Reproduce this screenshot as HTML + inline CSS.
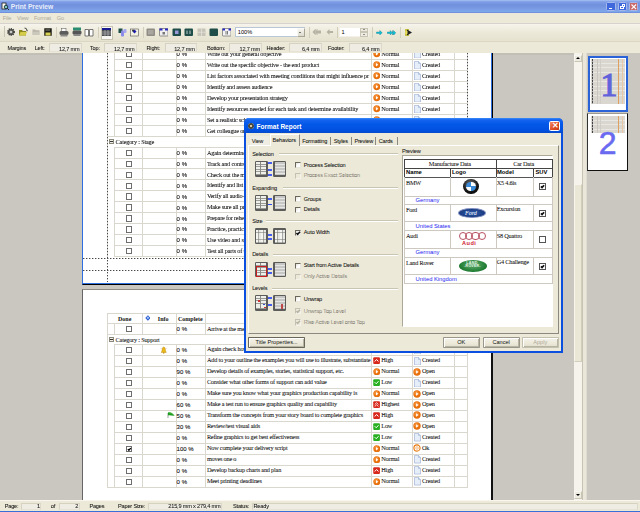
<!DOCTYPE html>
<html><head><meta charset="utf-8"><style>
*{margin:0;padding:0;box-sizing:border-box}
html,body{width:640px;height:512px;overflow:hidden;background:#ECE9D8;position:relative;font-family:"Liberation Sans",sans-serif}
.t{position:absolute;white-space:nowrap;line-height:1}
.ui{font-size:5.6px;letter-spacing:-0.18px;color:#111;-webkit-text-stroke:0.05px #111}
.sr{font-family:"Liberation Serif",serif;font-size:6.3px;letter-spacing:-0.22px;color:#111;-webkit-text-stroke:0.05px #111}
.ck{position:absolute;overflow:visible}
.pc{font-size:6px;color:#111;word-spacing:0.1px;-webkit-text-stroke:0.1px #111}
</style></head>
<body>
<div id="root" style="position:absolute;left:0;top:0;width:640px;height:512px;overflow:hidden;filter:blur(0.3px)">
<div style="position:absolute;left:0px;top:0px;width:640px;height:12.5px;background:linear-gradient(#A6C2F2 0,#7E9CE6 14%,#7090DE 40%,#7A9AE4 65%,#7CA8EA 88%,#6C86DA 100%)"></div>
<svg style="position:absolute;left:1px;top:1.5px" width="9" height="9" viewBox="0 0 18 18"><rect x="2" y="2" width="8" height="12" fill="#FFFFF4" stroke="#222" stroke-width="1.6"/><circle cx="10" cy="10" r="3.6" fill="#7ACAC0" stroke="#1A2A30" stroke-width="1.8"/><path d="M12.5 12.5 L16 16" stroke="#1A2A30" stroke-width="2"/></svg>
<div class="t " style="left:10.8px;top:4.2px;font-size:6.7px;font-weight:bold;color:#E8EEFA">Print Preview</div>
<div style="position:absolute;left:606px;top:1.8px;width:9.6px;height:9.6px;background:#3F68DC;border:0.7px solid #A4B8EC;border-radius:1.5px"></div>
<div style="position:absolute;left:617.7px;top:1.8px;width:9.6px;height:9.6px;background:#3F68DC;border:0.7px solid #A4B8EC;border-radius:1.5px"></div>
<div style="position:absolute;left:628.8px;top:1.8px;width:9.6px;height:9.6px;background:#C86868;border:0.7px solid #A4B8EC;border-radius:1.5px"></div>
<div style="position:absolute;left:608.6px;top:7.6px;width:3.6px;height:1.4px;background:#fff"></div>
<div style="position:absolute;left:621.6px;top:3.6px;width:3.8px;height:3.2px;border:1px solid #fff;border-top-width:1.4px"></div>
<div style="position:absolute;left:619.8px;top:5.6px;width:3.8px;height:3.4px;border:1px solid #fff;border-top-width:1.4px;background:#3F68DC"></div>
<svg style="position:absolute;left:629.8px;top:2.8px" width="7.6" height="7.6" viewBox="0 0 15.2 15.2"><path d="M3 3 L12.2 12.2 M12.2 3 L3 12.2" stroke="#fff" stroke-width="2.2"/></svg>
<div style="position:absolute;left:0px;top:12.5px;width:640px;height:11px;background:#ECE9D8;border-bottom:1px solid #D6D2CE"></div>
<div class="t " style="left:2.8px;top:15.6px;font-size:5.6px;letter-spacing:-0.12px;color:#ACA899">File</div>
<div class="t " style="left:17px;top:15.6px;font-size:5.6px;letter-spacing:-0.12px;color:#ACA899">View</div>
<div class="t " style="left:34px;top:15.6px;font-size:5.6px;letter-spacing:-0.12px;color:#ACA899">Format</div>
<div class="t " style="left:56.8px;top:15.6px;font-size:5.6px;letter-spacing:-0.12px;color:#ACA899">Go</div>
<div style="position:absolute;left:0px;top:23.5px;width:640px;height:18px;background:linear-gradient(#F6F4EC,#ECE9D8 50%,#E6E2D0);border-bottom:1px solid #DCD7C4"></div>
<div style="position:absolute;left:3.5px;top:26px;width:1px;height:11px;background:#C9C5B4"></div>
<div style="position:absolute;left:55.5px;top:26.5px;width:1px;height:11px;background:#D2CEBE"></div>
<div style="position:absolute;left:98.4px;top:26.5px;width:1px;height:11px;background:#D2CEBE"></div>
<div style="position:absolute;left:142.6px;top:26.5px;width:1px;height:11px;background:#D2CEBE"></div>
<div style="position:absolute;left:308.7px;top:26.5px;width:1px;height:11px;background:#D2CEBE"></div>
<div style="position:absolute;left:337px;top:26.5px;width:1px;height:11px;background:#D2CEBE"></div>
<div style="position:absolute;left:371.7px;top:26.5px;width:1px;height:11px;background:#D2CEBE"></div>
<div style="position:absolute;left:400px;top:26.5px;width:1px;height:11px;background:#D2CEBE"></div>
<svg style="position:absolute;left:5.5px;top:27px" width="10" height="10" viewBox="0 0 20 20"><circle cx="10" cy="10" r="6.2" fill="#5A5A58" stroke="#3A3A38" stroke-width="3.2" stroke-dasharray="2.2 1.8"/><circle cx="10" cy="10" r="2.6" fill="#C8C8C0"/></svg>
<svg style="position:absolute;left:17.5px;top:27px" width="10" height="10" viewBox="0 0 20 20"><path d="M2 6 h6 l2 2 h6 v9 h-14z" fill="#8C8620"/><path d="M2 17 l3 -7 h13 l-3 7z" fill="#D4CC48"/><path d="M13 2 q5 0 5 5" fill="none" stroke="#222" stroke-width="1.6"/><path d="M16 7 l2 2 l2 -2z" fill="#222"/></svg>
<svg style="position:absolute;left:31.5px;top:28px" width="8" height="8" viewBox="0 0 16 16"><path d="M1 3 h5 l1.5 1.5 h7.5 v9 h-14z" fill="#B9B6A9"/><path d="M1 13.5 l2 -6 h12 l-2 6z" fill="#CBC8BC"/></svg>
<svg style="position:absolute;left:43.5px;top:28px" width="8" height="8" viewBox="0 0 16 16"><rect x="0.5" y="0.5" width="15" height="15" fill="#1E1E18"/><rect x="3" y="1" width="9" height="5" fill="#505048"/><rect x="3" y="9" width="10" height="6" fill="#D8D050"/></svg>
<svg style="position:absolute;left:59px;top:27.5px" width="10" height="9" viewBox="0 0 20 18"><rect x="5" y="1" width="9" height="6" fill="#F8F8F8" stroke="#555" stroke-width="1"/><rect x="1" y="6" width="18" height="8" rx="3" fill="#5C5C5C"/><rect x="3" y="13" width="14" height="4" fill="#8A8A88"/></svg>
<svg style="position:absolute;left:71.5px;top:27px" width="10" height="10" viewBox="0 0 20 20"><rect x="2" y="1" width="16" height="6" fill="#2A8C70"/><rect x="1" y="7" width="18" height="8" rx="3" fill="#555"/><rect x="3" y="14" width="14" height="4" fill="#888"/></svg>
<svg style="position:absolute;left:84px;top:27.5px" width="10" height="9" viewBox="0 0 20 18"><path d="M2 3 h7 v13 h-7z" fill="#fff" stroke="#444" stroke-width="1.4"/><path d="M11 3 h7 v13 h-7z" fill="#fff" stroke="#444" stroke-width="1.4"/></svg>
<div style="position:absolute;left:100.5px;top:25.5px;width:12.5px;height:14px;background:#F8F7F2;border:1px solid #C8C4B2"></div>
<svg style="position:absolute;left:102px;top:27.8px" width="9" height="8" viewBox="0 0 18 16"><rect x="0" y="0" width="18" height="4" fill="#1A1A90"/><rect x="0" y="4" width="18" height="12" fill="#4A4E50"/><path d="M0 8 h18 M0 12 h18 M6 4 v12 M12 4 v12" stroke="#C8C8C8" stroke-width="1.2"/></svg>
<svg style="position:absolute;left:117.5px;top:27.5px" width="9.5" height="9" viewBox="0 0 19.0 18"><rect x="1" y="1" width="8" height="9" fill="#1E5048"/><rect x="6" y="5" width="6" height="12" rx="2" fill="#8A8AE8"/><rect x="11" y="2" width="6" height="8" rx="2" fill="#A8A8F0"/></svg>
<svg style="position:absolute;left:129.5px;top:27.5px" width="9.5" height="9" viewBox="0 0 19.0 18"><rect x="1" y="2" width="16" height="14" fill="#F4F2E0" stroke="#555" stroke-width="1.2"/><path d="M9 3 l4 4 l-4 4 l-4 -4z" fill="#2020B0"/><circle cx="6" cy="5" r="2" fill="#333"/></svg>
<svg style="position:absolute;left:146px;top:27.5px" width="9.5" height="9" viewBox="0 0 19.0 18"><rect x="1" y="1" width="17" height="15" rx="2" fill="#8F8D86"/><rect x="4" y="4" width="11" height="9" fill="#A8A69E"/></svg>
<svg style="position:absolute;left:158.5px;top:27.5px" width="9.5" height="9" viewBox="0 0 19.0 18"><rect x="1" y="1" width="17" height="15" rx="1" fill="#F0F0F0" stroke="#555" stroke-width="1.2"/><path d="M1 1 h6 v4 h-6z M12 1 h6 v4 h-6z" fill="#2A2AC0"/><rect x="7" y="8" width="5" height="5" fill="#777"/></svg>
<svg style="position:absolute;left:171.5px;top:27.5px" width="9.5" height="9" viewBox="0 0 19.0 18"><rect x="1" y="1" width="17" height="15" rx="2" fill="#1F4E4A"/><rect x="6" y="5" width="7" height="7" fill="#9A9AD8"/></svg>
<svg style="position:absolute;left:183.5px;top:27.5px" width="9.5" height="9" viewBox="0 0 19.0 18"><rect x="1" y="1" width="17" height="15" rx="2" fill="#1F4E4A"/><path d="M6 5 v7 M12 5 v7" stroke="#E8E8E8" stroke-width="1.6"/></svg>
<svg style="position:absolute;left:196.5px;top:27.5px" width="9" height="9" viewBox="0 0 18 18"><rect x="1" y="1" width="16" height="15" rx="1" fill="#C6C3B8"/><path d="M9 1 v15 M1 8.5 h16" stroke="#E8E6DE" stroke-width="1.4"/></svg>
<svg style="position:absolute;left:209px;top:27.5px" width="9.5" height="9" viewBox="0 0 19.0 18"><rect x="1" y="1" width="17" height="15" rx="2" fill="#1F4E4A"/></svg>
<svg style="position:absolute;left:221.5px;top:27.5px" width="9.5" height="9" viewBox="0 0 19.0 18"><rect x="1" y="1" width="17" height="15" rx="1" fill="#F4F4F4" stroke="#555" stroke-width="1.2"/><path d="M1 1 h5 v4 h-5z M13 1 h5 v4 h-5z" fill="#2A2AC0"/><path d="M8 6 v7 M11 6 v7" stroke="#444" stroke-width="1.4"/></svg>
<div style="position:absolute;left:235.3px;top:27px;width:69.7px;height:10.3px;background:#fff;border:1px solid #B8C6D8"></div>
<div class="t " style="left:237.8px;top:30.2px;font-size:5.6px;color:#000">100%</div>
<div style="position:absolute;left:297px;top:28px;width:7.5px;height:8.5px;background:linear-gradient(#F7F6F0,#DCD9CC);border:1px solid;border-color:#F8F8F4 #A8A496 #A8A496 #F8F8F4"></div>
<div style="position:absolute;left:299.2px;top:32.2px;width:0px;height:0px;border-left:1.6px solid transparent;border-right:1.6px solid transparent;border-top:1.8px solid #000"></div>
<svg style="position:absolute;left:312px;top:28px" width="9.5" height="8" viewBox="0 0 19.0 16"><path d="M1 8 l6 -6 v3 h4 v-3 l0 0 v0 M1 8 l6 6 v-3 h4 v3z" fill="#B5B2A4"/><path d="M7 5 h11 v6 h-11z" fill="#B5B2A4"/><path d="M1 8 l6 -6 v12z" fill="#B5B2A4"/></svg>
<svg style="position:absolute;left:325.5px;top:28px" width="7.5" height="8" viewBox="0 0 15.0 16"><path d="M1 8 l6 -6 v4 h7 v4 h-7 v4z" fill="#B5B2A4"/></svg>
<div style="position:absolute;left:339px;top:27px;width:29.5px;height:10.3px;background:#fff;border:1px solid #F2F0E8"></div>
<div class="t " style="left:341.5px;top:30.2px;font-size:5.6px;color:#000">1</div>
<div style="position:absolute;left:359.5px;top:27.5px;width:8.5px;height:4.6px;background:#EEECE2;border:0.6px solid #C8C4B4"></div>
<div style="position:absolute;left:359.5px;top:32.3px;width:8.5px;height:4.6px;background:#EEECE2;border:0.6px solid #C8C4B4"></div>
<div style="position:absolute;left:362.5px;top:29.3px;width:0px;height:0px;border-left:1.3px solid transparent;border-right:1.3px solid transparent;border-bottom:1.4px solid #333"></div>
<div style="position:absolute;left:362.5px;top:34.1px;width:0px;height:0px;border-left:1.3px solid transparent;border-right:1.3px solid transparent;border-top:1.4px solid #333"></div>
<svg style="position:absolute;left:376px;top:29.5px" width="6.5" height="5.5" viewBox="0 0 13.0 11.0"><path d="M12.5 5.5 l-5 -4.5 v3 h-6.5 v3 h6.5 v3z" fill="#10C0D8" stroke="#087888" stroke-width="0.7"/></svg>
<svg style="position:absolute;left:387px;top:29.5px" width="9" height="5.5" viewBox="0 0 18 11.0"><path d="M17.5 5.5 l-4.5 -4.5 v3 h-2 v-3 l-0 0 v7 v3 v-3 h2 v3z" fill="#10C0D8" stroke="#087888" stroke-width="0.7"/><path d="M11 5.5 l-4.5 -4.5 v3 h-6 v3 h6 v3z" fill="#10C0D8" stroke="#087888" stroke-width="0.7"/></svg>
<svg style="position:absolute;left:403.5px;top:27.5px" width="9" height="9" viewBox="0 0 18 18"><path d="M2 2 h8 v14 h-8z" fill="#C8C040"/><path d="M6 3 l10 6 l-10 6z" fill="#222"/><rect x="3" y="6" width="4" height="6" fill="#E8E060"/></svg>
<div style="position:absolute;left:0px;top:41.5px;width:640px;height:11.5px;background:#ECE9D8"></div>
<div class="t ui" style="left:7.5px;top:45.8px;">Margins</div>
<div class="t ui" style="left:34.7px;top:45.8px;">Left:</div>
<div style="position:absolute;left:49px;top:43px;width:32.6px;height:9.3px;background:#EFEDE3;border:1px solid;border-color:#D6D2C2 #DCD8CA #E6E3D6 #D6D2C2"></div>
<div class="t ui" style="left:49px;top:46.5px;width:30.6px;text-align:right">12,7 mm</div>
<div class="t ui" style="left:90px;top:45.8px;">Top:</div>
<div style="position:absolute;left:104px;top:43px;width:32.6px;height:9.3px;background:#EFEDE3;border:1px solid;border-color:#D6D2C2 #DCD8CA #E6E3D6 #D6D2C2"></div>
<div class="t ui" style="left:104px;top:46.5px;width:30.6px;text-align:right">12,7 mm</div>
<div class="t ui" style="left:146.5px;top:45.8px;">Right:</div>
<div style="position:absolute;left:164.7px;top:43px;width:32px;height:9.3px;background:#EFEDE3;border:1px solid;border-color:#D6D2C2 #DCD8CA #E6E3D6 #D6D2C2"></div>
<div class="t ui" style="left:164.7px;top:46.5px;width:30px;text-align:right">12,7 mm</div>
<div class="t ui" style="left:207px;top:45.8px;">Bottom:</div>
<div style="position:absolute;left:229px;top:43px;width:33px;height:9.3px;background:#EFEDE3;border:1px solid;border-color:#D6D2C2 #DCD8CA #E6E3D6 #D6D2C2"></div>
<div class="t ui" style="left:229px;top:46.5px;width:31px;text-align:right">12,7 mm</div>
<div class="t ui" style="left:266.6px;top:45.8px;">Header:</div>
<div style="position:absolute;left:289px;top:43px;width:32.6px;height:9.3px;background:#EFEDE3;border:1px solid;border-color:#D6D2C2 #DCD8CA #E6E3D6 #D6D2C2"></div>
<div class="t ui" style="left:289px;top:46.5px;width:30.6px;text-align:right">6,4 mm</div>
<div class="t ui" style="left:328px;top:45.8px;">Footer:</div>
<div style="position:absolute;left:349px;top:43px;width:32.6px;height:9.3px;background:#EFEDE3;border:1px solid;border-color:#D6D2C2 #DCD8CA #E6E3D6 #D6D2C2"></div>
<div class="t ui" style="left:349px;top:46.5px;width:30.6px;text-align:right">6,4 mm</div>
<div style="position:absolute;left:0px;top:53px;width:574px;height:447.3px;background:#CAC7C0"></div>
<div style="position:absolute;left:574px;top:53px;width:8.5px;height:447.3px;background:#F5F3EB"></div>
<div style="position:absolute;left:574px;top:54.6px;width:8.3px;height:7.4px;background:#EDEADF;border:1px solid;border-color:#F8F7F2 #C9C5B5 #C9C5B5 #F8F7F2"></div>
<div style="position:absolute;left:576.2px;top:56.9px;width:0px;height:0px;border-left:2px solid transparent;border-right:2px solid transparent;border-bottom:2.2px solid #000"></div>
<div style="position:absolute;left:574px;top:490.8px;width:8.3px;height:8px;background:#EDEADF;border:1px solid;border-color:#F8F7F2 #C9C5B5 #C9C5B5 #F8F7F2"></div>
<div style="position:absolute;left:576.2px;top:493.8px;width:0px;height:0px;border-left:2px solid transparent;border-right:2px solid transparent;border-top:2.2px solid #000"></div>
<div style="position:absolute;left:574px;top:183.8px;width:8.3px;height:178px;background:#EAE7D6;border:0.8px solid;border-color:#F6F4EC #D2CEBC #D2CEBC #F6F4EC"></div>
<div style="position:absolute;left:582px;top:53px;width:1px;height:447.3px;background:#C8C4B4"></div>
<div style="position:absolute;left:583px;top:53px;width:2.5px;height:447.3px;background:#EAE7DA"></div>
<div style="position:absolute;left:585.5px;top:53px;width:54.5px;height:447.3px;background:#CAC7C0;border-left:0.8px solid #DEDBD0"></div>
<div style="position:absolute;left:0px;top:53px;width:574px;height:1.5px;background:#C2BFB6"></div>
<div style="position:absolute;left:0;top:0;width:640px;height:500.3px;overflow:hidden;clip-path:inset(53px 0 0 0)">
<div style="position:absolute;left:82px;top:30px;width:411px;height:255px;background:#fff;border-left:1px solid #2F6FE0;border-right:1px solid #000;border-bottom:1px solid #000;box-shadow:inset -1px -1px 0 #2F6FE0"></div>
<div style="position:absolute;left:107px;top:48px;width:1px;height:12px;background:#DAD7CF"></div>
<div style="position:absolute;left:114px;top:59px;width:353px;height:1px;background:#DAD7CF"></div>
<div style="position:absolute;left:114px;top:48px;width:1px;height:12px;background:#DAD7CF"></div>
<div style="position:absolute;left:142px;top:48px;width:1px;height:12px;background:#DAD7CF"></div>
<div style="position:absolute;left:176px;top:48px;width:1px;height:12px;background:#DAD7CF"></div>
<div style="position:absolute;left:205px;top:48px;width:1px;height:12px;background:#DAD7CF"></div>
<div style="position:absolute;left:371px;top:48px;width:1px;height:12px;background:#DAD7CF"></div>
<div style="position:absolute;left:412px;top:48px;width:1px;height:12px;background:#DAD7CF"></div>
<div style="position:absolute;left:454px;top:48px;width:1px;height:12px;background:#DAD7CF"></div>
<div style="position:absolute;left:467px;top:48px;width:1px;height:12px;background:#DAD7CF"></div>
<div style="position:absolute;left:125.9px;top:51.12499999999999px;width:6.2px;height:6.2px;border:1px solid #6E6E6E;background:#fff"></div>
<div class="t pc" style="left:176.6px;top:51.24999999999999px;">0 %</div>
<div class="t sr" style="left:206.9px;top:51.05px;">Write out your general objective</div>
<svg style="position:absolute;left:372.5px;top:50.349999999999994px" width="7.6" height="7.6" viewBox="0 0 15.2 15.2"><circle cx="7.6" cy="7.6" r="7" fill="#E8700C"/><circle cx="6.6" cy="6" r="4.5" fill="#F8A050" opacity="0.6"/><path d="M6 4.2 L10.5 7.6 L6 11z" fill="#fff"/></svg>
<div class="t sr" style="left:381.3px;top:51.05px;">Normal</div>
<svg style="position:absolute;left:413.5px;top:50.14999999999999px" width="7" height="8.2" viewBox="0 0 14 16.4"><path d="M1 0.8 h8 l4 4 v11.4 h-12z" fill="#E6EEFA" stroke="#8CA0C8" stroke-width="1.1"/><path d="M9 0.8 v4 h4" fill="#C8D8F0" stroke="#8CA0C8" stroke-width="0.9"/></svg>
<div class="t sr" style="left:421.9px;top:51.05px;">Created</div>
<div style="position:absolute;left:107px;top:59px;width:1px;height:12px;background:#DAD7CF"></div>
<div style="position:absolute;left:114px;top:70px;width:353px;height:1px;background:#DAD7CF"></div>
<div style="position:absolute;left:114px;top:59px;width:1px;height:12px;background:#DAD7CF"></div>
<div style="position:absolute;left:142px;top:59px;width:1px;height:12px;background:#DAD7CF"></div>
<div style="position:absolute;left:176px;top:59px;width:1px;height:12px;background:#DAD7CF"></div>
<div style="position:absolute;left:205px;top:59px;width:1px;height:12px;background:#DAD7CF"></div>
<div style="position:absolute;left:371px;top:59px;width:1px;height:12px;background:#DAD7CF"></div>
<div style="position:absolute;left:412px;top:59px;width:1px;height:12px;background:#DAD7CF"></div>
<div style="position:absolute;left:454px;top:59px;width:1px;height:12px;background:#DAD7CF"></div>
<div style="position:absolute;left:467px;top:59px;width:1px;height:12px;background:#DAD7CF"></div>
<div style="position:absolute;left:125.9px;top:62.07499999999999px;width:6.2px;height:6.2px;border:1px solid #6E6E6E;background:#fff"></div>
<div class="t pc" style="left:176.6px;top:62.199999999999996px;">0 %</div>
<div class="t sr" style="left:206.9px;top:62.0px;">Write out the specific objective - the end product</div>
<svg style="position:absolute;left:372.5px;top:61.3px" width="7.6" height="7.6" viewBox="0 0 15.2 15.2"><circle cx="7.6" cy="7.6" r="7" fill="#E8700C"/><circle cx="6.6" cy="6" r="4.5" fill="#F8A050" opacity="0.6"/><path d="M6 4.2 L10.5 7.6 L6 11z" fill="#fff"/></svg>
<div class="t sr" style="left:381.3px;top:62.0px;">Normal</div>
<svg style="position:absolute;left:413.5px;top:61.099999999999994px" width="7" height="8.2" viewBox="0 0 14 16.4"><path d="M1 0.8 h8 l4 4 v11.4 h-12z" fill="#E6EEFA" stroke="#8CA0C8" stroke-width="1.1"/><path d="M9 0.8 v4 h4" fill="#C8D8F0" stroke="#8CA0C8" stroke-width="0.9"/></svg>
<div class="t sr" style="left:421.9px;top:62.0px;">Created</div>
<div style="position:absolute;left:107px;top:70px;width:1px;height:12px;background:#DAD7CF"></div>
<div style="position:absolute;left:114px;top:81px;width:353px;height:1px;background:#DAD7CF"></div>
<div style="position:absolute;left:114px;top:70px;width:1px;height:12px;background:#DAD7CF"></div>
<div style="position:absolute;left:142px;top:70px;width:1px;height:12px;background:#DAD7CF"></div>
<div style="position:absolute;left:176px;top:70px;width:1px;height:12px;background:#DAD7CF"></div>
<div style="position:absolute;left:205px;top:70px;width:1px;height:12px;background:#DAD7CF"></div>
<div style="position:absolute;left:371px;top:70px;width:1px;height:12px;background:#DAD7CF"></div>
<div style="position:absolute;left:412px;top:70px;width:1px;height:12px;background:#DAD7CF"></div>
<div style="position:absolute;left:454px;top:70px;width:1px;height:12px;background:#DAD7CF"></div>
<div style="position:absolute;left:467px;top:70px;width:1px;height:12px;background:#DAD7CF"></div>
<div style="position:absolute;left:125.9px;top:73.02499999999999px;width:6.2px;height:6.2px;border:1px solid #6E6E6E;background:#fff"></div>
<div class="t pc" style="left:176.6px;top:73.15px;">0 %</div>
<div class="t sr" style="left:206.9px;top:72.95px;">List factors associated with meeting conditions that might influence pr</div>
<svg style="position:absolute;left:372.5px;top:72.25px" width="7.6" height="7.6" viewBox="0 0 15.2 15.2"><circle cx="7.6" cy="7.6" r="7" fill="#E8700C"/><circle cx="6.6" cy="6" r="4.5" fill="#F8A050" opacity="0.6"/><path d="M6 4.2 L10.5 7.6 L6 11z" fill="#fff"/></svg>
<div class="t sr" style="left:381.3px;top:72.95px;">Normal</div>
<svg style="position:absolute;left:413.5px;top:72.05px" width="7" height="8.2" viewBox="0 0 14 16.4"><path d="M1 0.8 h8 l4 4 v11.4 h-12z" fill="#E6EEFA" stroke="#8CA0C8" stroke-width="1.1"/><path d="M9 0.8 v4 h4" fill="#C8D8F0" stroke="#8CA0C8" stroke-width="0.9"/></svg>
<div class="t sr" style="left:421.9px;top:72.95px;">Created</div>
<div style="position:absolute;left:107px;top:81px;width:1px;height:12px;background:#DAD7CF"></div>
<div style="position:absolute;left:114px;top:92px;width:353px;height:1px;background:#DAD7CF"></div>
<div style="position:absolute;left:114px;top:81px;width:1px;height:12px;background:#DAD7CF"></div>
<div style="position:absolute;left:142px;top:81px;width:1px;height:12px;background:#DAD7CF"></div>
<div style="position:absolute;left:176px;top:81px;width:1px;height:12px;background:#DAD7CF"></div>
<div style="position:absolute;left:205px;top:81px;width:1px;height:12px;background:#DAD7CF"></div>
<div style="position:absolute;left:371px;top:81px;width:1px;height:12px;background:#DAD7CF"></div>
<div style="position:absolute;left:412px;top:81px;width:1px;height:12px;background:#DAD7CF"></div>
<div style="position:absolute;left:454px;top:81px;width:1px;height:12px;background:#DAD7CF"></div>
<div style="position:absolute;left:467px;top:81px;width:1px;height:12px;background:#DAD7CF"></div>
<div style="position:absolute;left:125.9px;top:83.97499999999998px;width:6.2px;height:6.2px;border:1px solid #6E6E6E;background:#fff"></div>
<div class="t pc" style="left:176.6px;top:84.1px;">0 %</div>
<div class="t sr" style="left:206.9px;top:83.89999999999999px;">Identify and assess audience</div>
<svg style="position:absolute;left:372.5px;top:83.19999999999999px" width="7.6" height="7.6" viewBox="0 0 15.2 15.2"><circle cx="7.6" cy="7.6" r="7" fill="#E8700C"/><circle cx="6.6" cy="6" r="4.5" fill="#F8A050" opacity="0.6"/><path d="M6 4.2 L10.5 7.6 L6 11z" fill="#fff"/></svg>
<div class="t sr" style="left:381.3px;top:83.89999999999999px;">Normal</div>
<svg style="position:absolute;left:413.5px;top:82.99999999999999px" width="7" height="8.2" viewBox="0 0 14 16.4"><path d="M1 0.8 h8 l4 4 v11.4 h-12z" fill="#E6EEFA" stroke="#8CA0C8" stroke-width="1.1"/><path d="M9 0.8 v4 h4" fill="#C8D8F0" stroke="#8CA0C8" stroke-width="0.9"/></svg>
<div class="t sr" style="left:421.9px;top:83.89999999999999px;">Created</div>
<div style="position:absolute;left:107px;top:92px;width:1px;height:12px;background:#DAD7CF"></div>
<div style="position:absolute;left:114px;top:103px;width:353px;height:1px;background:#DAD7CF"></div>
<div style="position:absolute;left:114px;top:92px;width:1px;height:12px;background:#DAD7CF"></div>
<div style="position:absolute;left:142px;top:92px;width:1px;height:12px;background:#DAD7CF"></div>
<div style="position:absolute;left:176px;top:92px;width:1px;height:12px;background:#DAD7CF"></div>
<div style="position:absolute;left:205px;top:92px;width:1px;height:12px;background:#DAD7CF"></div>
<div style="position:absolute;left:371px;top:92px;width:1px;height:12px;background:#DAD7CF"></div>
<div style="position:absolute;left:412px;top:92px;width:1px;height:12px;background:#DAD7CF"></div>
<div style="position:absolute;left:454px;top:92px;width:1px;height:12px;background:#DAD7CF"></div>
<div style="position:absolute;left:467px;top:92px;width:1px;height:12px;background:#DAD7CF"></div>
<div style="position:absolute;left:125.9px;top:94.92499999999998px;width:6.2px;height:6.2px;border:1px solid #6E6E6E;background:#fff"></div>
<div class="t pc" style="left:176.6px;top:95.05px;">0 %</div>
<div class="t sr" style="left:206.9px;top:94.85px;">Develop your presentation strategy</div>
<svg style="position:absolute;left:372.5px;top:94.14999999999999px" width="7.6" height="7.6" viewBox="0 0 15.2 15.2"><circle cx="7.6" cy="7.6" r="7" fill="#E8700C"/><circle cx="6.6" cy="6" r="4.5" fill="#F8A050" opacity="0.6"/><path d="M6 4.2 L10.5 7.6 L6 11z" fill="#fff"/></svg>
<div class="t sr" style="left:381.3px;top:94.85px;">Normal</div>
<svg style="position:absolute;left:413.5px;top:93.94999999999999px" width="7" height="8.2" viewBox="0 0 14 16.4"><path d="M1 0.8 h8 l4 4 v11.4 h-12z" fill="#E6EEFA" stroke="#8CA0C8" stroke-width="1.1"/><path d="M9 0.8 v4 h4" fill="#C8D8F0" stroke="#8CA0C8" stroke-width="0.9"/></svg>
<div class="t sr" style="left:421.9px;top:94.85px;">Created</div>
<div style="position:absolute;left:107px;top:103px;width:1px;height:12px;background:#DAD7CF"></div>
<div style="position:absolute;left:114px;top:114px;width:353px;height:1px;background:#DAD7CF"></div>
<div style="position:absolute;left:114px;top:103px;width:1px;height:12px;background:#DAD7CF"></div>
<div style="position:absolute;left:142px;top:103px;width:1px;height:12px;background:#DAD7CF"></div>
<div style="position:absolute;left:176px;top:103px;width:1px;height:12px;background:#DAD7CF"></div>
<div style="position:absolute;left:205px;top:103px;width:1px;height:12px;background:#DAD7CF"></div>
<div style="position:absolute;left:371px;top:103px;width:1px;height:12px;background:#DAD7CF"></div>
<div style="position:absolute;left:412px;top:103px;width:1px;height:12px;background:#DAD7CF"></div>
<div style="position:absolute;left:454px;top:103px;width:1px;height:12px;background:#DAD7CF"></div>
<div style="position:absolute;left:467px;top:103px;width:1px;height:12px;background:#DAD7CF"></div>
<div style="position:absolute;left:125.9px;top:105.87499999999999px;width:6.2px;height:6.2px;border:1px solid #6E6E6E;background:#fff"></div>
<div class="t pc" style="left:176.6px;top:106.0px;">0 %</div>
<div class="t sr" style="left:206.9px;top:105.8px;">Identify resources needed for each task and determine availability</div>
<svg style="position:absolute;left:372.5px;top:105.1px" width="7.6" height="7.6" viewBox="0 0 15.2 15.2"><circle cx="7.6" cy="7.6" r="7" fill="#E8700C"/><circle cx="6.6" cy="6" r="4.5" fill="#F8A050" opacity="0.6"/><path d="M6 4.2 L10.5 7.6 L6 11z" fill="#fff"/></svg>
<div class="t sr" style="left:381.3px;top:105.8px;">Normal</div>
<svg style="position:absolute;left:413.5px;top:104.89999999999999px" width="7" height="8.2" viewBox="0 0 14 16.4"><path d="M1 0.8 h8 l4 4 v11.4 h-12z" fill="#E6EEFA" stroke="#8CA0C8" stroke-width="1.1"/><path d="M9 0.8 v4 h4" fill="#C8D8F0" stroke="#8CA0C8" stroke-width="0.9"/></svg>
<div class="t sr" style="left:421.9px;top:105.8px;">Created</div>
<div style="position:absolute;left:107px;top:114px;width:1px;height:12px;background:#DAD7CF"></div>
<div style="position:absolute;left:114px;top:125px;width:353px;height:1px;background:#DAD7CF"></div>
<div style="position:absolute;left:114px;top:114px;width:1px;height:12px;background:#DAD7CF"></div>
<div style="position:absolute;left:142px;top:114px;width:1px;height:12px;background:#DAD7CF"></div>
<div style="position:absolute;left:176px;top:114px;width:1px;height:12px;background:#DAD7CF"></div>
<div style="position:absolute;left:205px;top:114px;width:1px;height:12px;background:#DAD7CF"></div>
<div style="position:absolute;left:371px;top:114px;width:1px;height:12px;background:#DAD7CF"></div>
<div style="position:absolute;left:412px;top:114px;width:1px;height:12px;background:#DAD7CF"></div>
<div style="position:absolute;left:454px;top:114px;width:1px;height:12px;background:#DAD7CF"></div>
<div style="position:absolute;left:467px;top:114px;width:1px;height:12px;background:#DAD7CF"></div>
<div style="position:absolute;left:125.9px;top:116.82499999999997px;width:6.2px;height:6.2px;border:1px solid #6E6E6E;background:#fff"></div>
<div class="t pc" style="left:176.6px;top:116.94999999999999px;">0 %</div>
<div class="t sr" style="left:206.9px;top:116.74999999999999px;">Set a realistic schedule</div>
<svg style="position:absolute;left:372.5px;top:116.04999999999998px" width="7.6" height="7.6" viewBox="0 0 15.2 15.2"><circle cx="7.6" cy="7.6" r="7" fill="#E8700C"/><circle cx="6.6" cy="6" r="4.5" fill="#F8A050" opacity="0.6"/><path d="M6 4.2 L10.5 7.6 L6 11z" fill="#fff"/></svg>
<div class="t sr" style="left:381.3px;top:116.74999999999999px;">Normal</div>
<svg style="position:absolute;left:413.5px;top:115.84999999999998px" width="7" height="8.2" viewBox="0 0 14 16.4"><path d="M1 0.8 h8 l4 4 v11.4 h-12z" fill="#E6EEFA" stroke="#8CA0C8" stroke-width="1.1"/><path d="M9 0.8 v4 h4" fill="#C8D8F0" stroke="#8CA0C8" stroke-width="0.9"/></svg>
<div class="t sr" style="left:421.9px;top:116.74999999999999px;">Created</div>
<div style="position:absolute;left:107px;top:125px;width:1px;height:12px;background:#DAD7CF"></div>
<div style="position:absolute;left:114px;top:136px;width:353px;height:1px;background:#DAD7CF"></div>
<div style="position:absolute;left:114px;top:125px;width:1px;height:12px;background:#DAD7CF"></div>
<div style="position:absolute;left:142px;top:125px;width:1px;height:12px;background:#DAD7CF"></div>
<div style="position:absolute;left:176px;top:125px;width:1px;height:12px;background:#DAD7CF"></div>
<div style="position:absolute;left:205px;top:125px;width:1px;height:12px;background:#DAD7CF"></div>
<div style="position:absolute;left:371px;top:125px;width:1px;height:12px;background:#DAD7CF"></div>
<div style="position:absolute;left:412px;top:125px;width:1px;height:12px;background:#DAD7CF"></div>
<div style="position:absolute;left:454px;top:125px;width:1px;height:12px;background:#DAD7CF"></div>
<div style="position:absolute;left:467px;top:125px;width:1px;height:12px;background:#DAD7CF"></div>
<div style="position:absolute;left:125.9px;top:127.775px;width:6.2px;height:6.2px;border:1px solid #6E6E6E;background:#fff"></div>
<div class="t pc" style="left:176.6px;top:127.89999999999999px;">0 %</div>
<div class="t sr" style="left:206.9px;top:127.69999999999999px;">Get colleague or supervisor to review</div>
<svg style="position:absolute;left:372.5px;top:126.99999999999999px" width="7.6" height="7.6" viewBox="0 0 15.2 15.2"><circle cx="7.6" cy="7.6" r="7" fill="#E8700C"/><circle cx="6.6" cy="6" r="4.5" fill="#F8A050" opacity="0.6"/><path d="M6 4.2 L10.5 7.6 L6 11z" fill="#fff"/></svg>
<div class="t sr" style="left:381.3px;top:127.69999999999999px;">Normal</div>
<svg style="position:absolute;left:413.5px;top:126.79999999999998px" width="7" height="8.2" viewBox="0 0 14 16.4"><path d="M1 0.8 h8 l4 4 v11.4 h-12z" fill="#E6EEFA" stroke="#8CA0C8" stroke-width="1.1"/><path d="M9 0.8 v4 h4" fill="#C8D8F0" stroke="#8CA0C8" stroke-width="0.9"/></svg>
<div class="t sr" style="left:421.9px;top:127.69999999999999px;">Created</div>
<div style="position:absolute;left:107px;top:136px;width:361px;height:1px;background:#DAD7CF"></div>
<div style="position:absolute;left:114px;top:147px;width:353px;height:1px;background:#DAD7CF"></div>
<div style="position:absolute;left:107px;top:136px;width:1px;height:12px;background:#DAD7CF"></div>
<div style="position:absolute;left:467px;top:136px;width:1px;height:12px;background:#DAD7CF"></div>
<div style="position:absolute;left:109px;top:138.95px;width:5px;height:5px;border:1px solid #8A8878;background:#F0EEE6"></div>
<div style="position:absolute;left:110.4px;top:140.85px;width:2.4px;height:0.9px;background:#333"></div>
<div class="t sr" style="left:115.6px;top:138.75px;">Category : Stage</div>
<div style="position:absolute;left:107px;top:147px;width:1px;height:12px;background:#DAD7CF"></div>
<div style="position:absolute;left:114px;top:158px;width:353px;height:1px;background:#DAD7CF"></div>
<div style="position:absolute;left:114px;top:147px;width:1px;height:12px;background:#DAD7CF"></div>
<div style="position:absolute;left:142px;top:147px;width:1px;height:12px;background:#DAD7CF"></div>
<div style="position:absolute;left:176px;top:147px;width:1px;height:12px;background:#DAD7CF"></div>
<div style="position:absolute;left:205px;top:147px;width:1px;height:12px;background:#DAD7CF"></div>
<div style="position:absolute;left:371px;top:147px;width:1px;height:12px;background:#DAD7CF"></div>
<div style="position:absolute;left:412px;top:147px;width:1px;height:12px;background:#DAD7CF"></div>
<div style="position:absolute;left:454px;top:147px;width:1px;height:12px;background:#DAD7CF"></div>
<div style="position:absolute;left:467px;top:147px;width:1px;height:12px;background:#DAD7CF"></div>
<div style="position:absolute;left:125.9px;top:149.67499999999998px;width:6.2px;height:6.2px;border:1px solid #6E6E6E;background:#fff"></div>
<div class="t pc" style="left:176.6px;top:149.79999999999998px;">0 %</div>
<div class="t sr" style="left:206.9px;top:149.59999999999997px;">Again determine the outline</div>
<svg style="position:absolute;left:372.5px;top:148.89999999999998px" width="7.6" height="7.6" viewBox="0 0 15.2 15.2"><circle cx="7.6" cy="7.6" r="7" fill="#E8700C"/><circle cx="6.6" cy="6" r="4.5" fill="#F8A050" opacity="0.6"/><path d="M6 4.2 L10.5 7.6 L6 11z" fill="#fff"/></svg>
<div class="t sr" style="left:381.3px;top:149.59999999999997px;">Normal</div>
<svg style="position:absolute;left:413.5px;top:148.7px" width="7" height="8.2" viewBox="0 0 14 16.4"><path d="M1 0.8 h8 l4 4 v11.4 h-12z" fill="#E6EEFA" stroke="#8CA0C8" stroke-width="1.1"/><path d="M9 0.8 v4 h4" fill="#C8D8F0" stroke="#8CA0C8" stroke-width="0.9"/></svg>
<div class="t sr" style="left:421.9px;top:149.59999999999997px;">Created</div>
<div style="position:absolute;left:107px;top:158px;width:1px;height:11px;background:#DAD7CF"></div>
<div style="position:absolute;left:114px;top:168px;width:353px;height:1px;background:#DAD7CF"></div>
<div style="position:absolute;left:114px;top:158px;width:1px;height:11px;background:#DAD7CF"></div>
<div style="position:absolute;left:142px;top:158px;width:1px;height:11px;background:#DAD7CF"></div>
<div style="position:absolute;left:176px;top:158px;width:1px;height:11px;background:#DAD7CF"></div>
<div style="position:absolute;left:205px;top:158px;width:1px;height:11px;background:#DAD7CF"></div>
<div style="position:absolute;left:371px;top:158px;width:1px;height:11px;background:#DAD7CF"></div>
<div style="position:absolute;left:412px;top:158px;width:1px;height:11px;background:#DAD7CF"></div>
<div style="position:absolute;left:454px;top:158px;width:1px;height:11px;background:#DAD7CF"></div>
<div style="position:absolute;left:467px;top:158px;width:1px;height:11px;background:#DAD7CF"></div>
<div style="position:absolute;left:125.9px;top:160.62499999999997px;width:6.2px;height:6.2px;border:1px solid #6E6E6E;background:#fff"></div>
<div class="t pc" style="left:176.6px;top:160.74999999999997px;">0 %</div>
<div class="t sr" style="left:206.9px;top:160.54999999999995px;">Track and control the progress</div>
<svg style="position:absolute;left:372.5px;top:159.84999999999997px" width="7.6" height="7.6" viewBox="0 0 15.2 15.2"><circle cx="7.6" cy="7.6" r="7" fill="#E8700C"/><circle cx="6.6" cy="6" r="4.5" fill="#F8A050" opacity="0.6"/><path d="M6 4.2 L10.5 7.6 L6 11z" fill="#fff"/></svg>
<div class="t sr" style="left:381.3px;top:160.54999999999995px;">Normal</div>
<svg style="position:absolute;left:413.5px;top:159.64999999999998px" width="7" height="8.2" viewBox="0 0 14 16.4"><path d="M1 0.8 h8 l4 4 v11.4 h-12z" fill="#E6EEFA" stroke="#8CA0C8" stroke-width="1.1"/><path d="M9 0.8 v4 h4" fill="#C8D8F0" stroke="#8CA0C8" stroke-width="0.9"/></svg>
<div class="t sr" style="left:421.9px;top:160.54999999999995px;">Created</div>
<div style="position:absolute;left:107px;top:168px;width:1px;height:12px;background:#DAD7CF"></div>
<div style="position:absolute;left:114px;top:179px;width:353px;height:1px;background:#DAD7CF"></div>
<div style="position:absolute;left:114px;top:168px;width:1px;height:12px;background:#DAD7CF"></div>
<div style="position:absolute;left:142px;top:168px;width:1px;height:12px;background:#DAD7CF"></div>
<div style="position:absolute;left:176px;top:168px;width:1px;height:12px;background:#DAD7CF"></div>
<div style="position:absolute;left:205px;top:168px;width:1px;height:12px;background:#DAD7CF"></div>
<div style="position:absolute;left:371px;top:168px;width:1px;height:12px;background:#DAD7CF"></div>
<div style="position:absolute;left:412px;top:168px;width:1px;height:12px;background:#DAD7CF"></div>
<div style="position:absolute;left:454px;top:168px;width:1px;height:12px;background:#DAD7CF"></div>
<div style="position:absolute;left:467px;top:168px;width:1px;height:12px;background:#DAD7CF"></div>
<div style="position:absolute;left:125.9px;top:171.575px;width:6.2px;height:6.2px;border:1px solid #6E6E6E;background:#fff"></div>
<div class="t pc" style="left:176.6px;top:171.7px;">0 %</div>
<div class="t sr" style="left:206.9px;top:171.49999999999997px;">Check out the meeting room</div>
<svg style="position:absolute;left:372.5px;top:170.79999999999998px" width="7.6" height="7.6" viewBox="0 0 15.2 15.2"><circle cx="7.6" cy="7.6" r="7" fill="#E8700C"/><circle cx="6.6" cy="6" r="4.5" fill="#F8A050" opacity="0.6"/><path d="M6 4.2 L10.5 7.6 L6 11z" fill="#fff"/></svg>
<div class="t sr" style="left:381.3px;top:171.49999999999997px;">Normal</div>
<svg style="position:absolute;left:413.5px;top:170.6px" width="7" height="8.2" viewBox="0 0 14 16.4"><path d="M1 0.8 h8 l4 4 v11.4 h-12z" fill="#E6EEFA" stroke="#8CA0C8" stroke-width="1.1"/><path d="M9 0.8 v4 h4" fill="#C8D8F0" stroke="#8CA0C8" stroke-width="0.9"/></svg>
<div class="t sr" style="left:421.9px;top:171.49999999999997px;">Created</div>
<div style="position:absolute;left:107px;top:179px;width:1px;height:12px;background:#DAD7CF"></div>
<div style="position:absolute;left:114px;top:190px;width:353px;height:1px;background:#DAD7CF"></div>
<div style="position:absolute;left:114px;top:179px;width:1px;height:12px;background:#DAD7CF"></div>
<div style="position:absolute;left:142px;top:179px;width:1px;height:12px;background:#DAD7CF"></div>
<div style="position:absolute;left:176px;top:179px;width:1px;height:12px;background:#DAD7CF"></div>
<div style="position:absolute;left:205px;top:179px;width:1px;height:12px;background:#DAD7CF"></div>
<div style="position:absolute;left:371px;top:179px;width:1px;height:12px;background:#DAD7CF"></div>
<div style="position:absolute;left:412px;top:179px;width:1px;height:12px;background:#DAD7CF"></div>
<div style="position:absolute;left:454px;top:179px;width:1px;height:12px;background:#DAD7CF"></div>
<div style="position:absolute;left:467px;top:179px;width:1px;height:12px;background:#DAD7CF"></div>
<div style="position:absolute;left:125.9px;top:182.52499999999998px;width:6.2px;height:6.2px;border:1px solid #6E6E6E;background:#fff"></div>
<div class="t pc" style="left:176.6px;top:182.64999999999998px;">0 %</div>
<div class="t sr" style="left:206.9px;top:182.44999999999996px;">Identify and list equipment</div>
<svg style="position:absolute;left:372.5px;top:181.74999999999997px" width="7.6" height="7.6" viewBox="0 0 15.2 15.2"><circle cx="7.6" cy="7.6" r="7" fill="#E8700C"/><circle cx="6.6" cy="6" r="4.5" fill="#F8A050" opacity="0.6"/><path d="M6 4.2 L10.5 7.6 L6 11z" fill="#fff"/></svg>
<div class="t sr" style="left:381.3px;top:182.44999999999996px;">Normal</div>
<svg style="position:absolute;left:413.5px;top:181.54999999999998px" width="7" height="8.2" viewBox="0 0 14 16.4"><path d="M1 0.8 h8 l4 4 v11.4 h-12z" fill="#E6EEFA" stroke="#8CA0C8" stroke-width="1.1"/><path d="M9 0.8 v4 h4" fill="#C8D8F0" stroke="#8CA0C8" stroke-width="0.9"/></svg>
<div class="t sr" style="left:421.9px;top:182.44999999999996px;">Created</div>
<div style="position:absolute;left:107px;top:190px;width:1px;height:12px;background:#DAD7CF"></div>
<div style="position:absolute;left:114px;top:201px;width:353px;height:1px;background:#DAD7CF"></div>
<div style="position:absolute;left:114px;top:190px;width:1px;height:12px;background:#DAD7CF"></div>
<div style="position:absolute;left:142px;top:190px;width:1px;height:12px;background:#DAD7CF"></div>
<div style="position:absolute;left:176px;top:190px;width:1px;height:12px;background:#DAD7CF"></div>
<div style="position:absolute;left:205px;top:190px;width:1px;height:12px;background:#DAD7CF"></div>
<div style="position:absolute;left:371px;top:190px;width:1px;height:12px;background:#DAD7CF"></div>
<div style="position:absolute;left:412px;top:190px;width:1px;height:12px;background:#DAD7CF"></div>
<div style="position:absolute;left:454px;top:190px;width:1px;height:12px;background:#DAD7CF"></div>
<div style="position:absolute;left:467px;top:190px;width:1px;height:12px;background:#DAD7CF"></div>
<div style="position:absolute;left:125.9px;top:193.475px;width:6.2px;height:6.2px;border:1px solid #6E6E6E;background:#fff"></div>
<div class="t pc" style="left:176.6px;top:193.6px;">0 %</div>
<div class="t sr" style="left:206.9px;top:193.39999999999998px;">Verify all audio-visual aids</div>
<svg style="position:absolute;left:372.5px;top:192.7px" width="7.6" height="7.6" viewBox="0 0 15.2 15.2"><circle cx="7.6" cy="7.6" r="7" fill="#E8700C"/><circle cx="6.6" cy="6" r="4.5" fill="#F8A050" opacity="0.6"/><path d="M6 4.2 L10.5 7.6 L6 11z" fill="#fff"/></svg>
<div class="t sr" style="left:381.3px;top:193.39999999999998px;">Normal</div>
<svg style="position:absolute;left:413.5px;top:192.5px" width="7" height="8.2" viewBox="0 0 14 16.4"><path d="M1 0.8 h8 l4 4 v11.4 h-12z" fill="#E6EEFA" stroke="#8CA0C8" stroke-width="1.1"/><path d="M9 0.8 v4 h4" fill="#C8D8F0" stroke="#8CA0C8" stroke-width="0.9"/></svg>
<div class="t sr" style="left:421.9px;top:193.39999999999998px;">Created</div>
<div style="position:absolute;left:107px;top:201px;width:1px;height:12px;background:#DAD7CF"></div>
<div style="position:absolute;left:114px;top:212px;width:353px;height:1px;background:#DAD7CF"></div>
<div style="position:absolute;left:114px;top:201px;width:1px;height:12px;background:#DAD7CF"></div>
<div style="position:absolute;left:142px;top:201px;width:1px;height:12px;background:#DAD7CF"></div>
<div style="position:absolute;left:176px;top:201px;width:1px;height:12px;background:#DAD7CF"></div>
<div style="position:absolute;left:205px;top:201px;width:1px;height:12px;background:#DAD7CF"></div>
<div style="position:absolute;left:371px;top:201px;width:1px;height:12px;background:#DAD7CF"></div>
<div style="position:absolute;left:412px;top:201px;width:1px;height:12px;background:#DAD7CF"></div>
<div style="position:absolute;left:454px;top:201px;width:1px;height:12px;background:#DAD7CF"></div>
<div style="position:absolute;left:467px;top:201px;width:1px;height:12px;background:#DAD7CF"></div>
<div style="position:absolute;left:125.9px;top:204.42499999999998px;width:6.2px;height:6.2px;border:1px solid #6E6E6E;background:#fff"></div>
<div class="t pc" style="left:176.6px;top:204.54999999999998px;">0 %</div>
<div class="t sr" style="left:206.9px;top:204.34999999999997px;">Make sure all presenters are ready</div>
<svg style="position:absolute;left:372.5px;top:203.64999999999998px" width="7.6" height="7.6" viewBox="0 0 15.2 15.2"><circle cx="7.6" cy="7.6" r="7" fill="#E8700C"/><circle cx="6.6" cy="6" r="4.5" fill="#F8A050" opacity="0.6"/><path d="M6 4.2 L10.5 7.6 L6 11z" fill="#fff"/></svg>
<div class="t sr" style="left:381.3px;top:204.34999999999997px;">Normal</div>
<svg style="position:absolute;left:413.5px;top:203.45px" width="7" height="8.2" viewBox="0 0 14 16.4"><path d="M1 0.8 h8 l4 4 v11.4 h-12z" fill="#E6EEFA" stroke="#8CA0C8" stroke-width="1.1"/><path d="M9 0.8 v4 h4" fill="#C8D8F0" stroke="#8CA0C8" stroke-width="0.9"/></svg>
<div class="t sr" style="left:421.9px;top:204.34999999999997px;">Created</div>
<div style="position:absolute;left:107px;top:212px;width:1px;height:12px;background:#DAD7CF"></div>
<div style="position:absolute;left:114px;top:223px;width:353px;height:1px;background:#DAD7CF"></div>
<div style="position:absolute;left:114px;top:212px;width:1px;height:12px;background:#DAD7CF"></div>
<div style="position:absolute;left:142px;top:212px;width:1px;height:12px;background:#DAD7CF"></div>
<div style="position:absolute;left:176px;top:212px;width:1px;height:12px;background:#DAD7CF"></div>
<div style="position:absolute;left:205px;top:212px;width:1px;height:12px;background:#DAD7CF"></div>
<div style="position:absolute;left:371px;top:212px;width:1px;height:12px;background:#DAD7CF"></div>
<div style="position:absolute;left:412px;top:212px;width:1px;height:12px;background:#DAD7CF"></div>
<div style="position:absolute;left:454px;top:212px;width:1px;height:12px;background:#DAD7CF"></div>
<div style="position:absolute;left:467px;top:212px;width:1px;height:12px;background:#DAD7CF"></div>
<div style="position:absolute;left:125.9px;top:215.37499999999997px;width:6.2px;height:6.2px;border:1px solid #6E6E6E;background:#fff"></div>
<div class="t pc" style="left:176.6px;top:215.49999999999997px;">0 %</div>
<div class="t sr" style="left:206.9px;top:215.29999999999995px;">Prepare for rehearsal</div>
<svg style="position:absolute;left:372.5px;top:214.59999999999997px" width="7.6" height="7.6" viewBox="0 0 15.2 15.2"><circle cx="7.6" cy="7.6" r="7" fill="#E8700C"/><circle cx="6.6" cy="6" r="4.5" fill="#F8A050" opacity="0.6"/><path d="M6 4.2 L10.5 7.6 L6 11z" fill="#fff"/></svg>
<div class="t sr" style="left:381.3px;top:215.29999999999995px;">Normal</div>
<svg style="position:absolute;left:413.5px;top:214.39999999999998px" width="7" height="8.2" viewBox="0 0 14 16.4"><path d="M1 0.8 h8 l4 4 v11.4 h-12z" fill="#E6EEFA" stroke="#8CA0C8" stroke-width="1.1"/><path d="M9 0.8 v4 h4" fill="#C8D8F0" stroke="#8CA0C8" stroke-width="0.9"/></svg>
<div class="t sr" style="left:421.9px;top:215.29999999999995px;">Created</div>
<div style="position:absolute;left:107px;top:223px;width:1px;height:12px;background:#DAD7CF"></div>
<div style="position:absolute;left:114px;top:234px;width:353px;height:1px;background:#DAD7CF"></div>
<div style="position:absolute;left:114px;top:223px;width:1px;height:12px;background:#DAD7CF"></div>
<div style="position:absolute;left:142px;top:223px;width:1px;height:12px;background:#DAD7CF"></div>
<div style="position:absolute;left:176px;top:223px;width:1px;height:12px;background:#DAD7CF"></div>
<div style="position:absolute;left:205px;top:223px;width:1px;height:12px;background:#DAD7CF"></div>
<div style="position:absolute;left:371px;top:223px;width:1px;height:12px;background:#DAD7CF"></div>
<div style="position:absolute;left:412px;top:223px;width:1px;height:12px;background:#DAD7CF"></div>
<div style="position:absolute;left:454px;top:223px;width:1px;height:12px;background:#DAD7CF"></div>
<div style="position:absolute;left:467px;top:223px;width:1px;height:12px;background:#DAD7CF"></div>
<div style="position:absolute;left:125.9px;top:226.32499999999996px;width:6.2px;height:6.2px;border:1px solid #6E6E6E;background:#fff"></div>
<div class="t pc" style="left:176.6px;top:226.44999999999996px;">0 %</div>
<div class="t sr" style="left:206.9px;top:226.24999999999994px;">Practice, practice, practice</div>
<svg style="position:absolute;left:372.5px;top:225.54999999999995px" width="7.6" height="7.6" viewBox="0 0 15.2 15.2"><circle cx="7.6" cy="7.6" r="7" fill="#E8700C"/><circle cx="6.6" cy="6" r="4.5" fill="#F8A050" opacity="0.6"/><path d="M6 4.2 L10.5 7.6 L6 11z" fill="#fff"/></svg>
<div class="t sr" style="left:381.3px;top:226.24999999999994px;">Normal</div>
<svg style="position:absolute;left:413.5px;top:225.34999999999997px" width="7" height="8.2" viewBox="0 0 14 16.4"><path d="M1 0.8 h8 l4 4 v11.4 h-12z" fill="#E6EEFA" stroke="#8CA0C8" stroke-width="1.1"/><path d="M9 0.8 v4 h4" fill="#C8D8F0" stroke="#8CA0C8" stroke-width="0.9"/></svg>
<div class="t sr" style="left:421.9px;top:226.24999999999994px;">Created</div>
<div style="position:absolute;left:107px;top:234px;width:1px;height:12px;background:#DAD7CF"></div>
<div style="position:absolute;left:114px;top:245px;width:353px;height:1px;background:#DAD7CF"></div>
<div style="position:absolute;left:114px;top:234px;width:1px;height:12px;background:#DAD7CF"></div>
<div style="position:absolute;left:142px;top:234px;width:1px;height:12px;background:#DAD7CF"></div>
<div style="position:absolute;left:176px;top:234px;width:1px;height:12px;background:#DAD7CF"></div>
<div style="position:absolute;left:205px;top:234px;width:1px;height:12px;background:#DAD7CF"></div>
<div style="position:absolute;left:371px;top:234px;width:1px;height:12px;background:#DAD7CF"></div>
<div style="position:absolute;left:412px;top:234px;width:1px;height:12px;background:#DAD7CF"></div>
<div style="position:absolute;left:454px;top:234px;width:1px;height:12px;background:#DAD7CF"></div>
<div style="position:absolute;left:467px;top:234px;width:1px;height:12px;background:#DAD7CF"></div>
<div style="position:absolute;left:125.9px;top:237.27499999999998px;width:6.2px;height:6.2px;border:1px solid #6E6E6E;background:#fff"></div>
<div class="t pc" style="left:176.6px;top:237.39999999999998px;">0 %</div>
<div class="t sr" style="left:206.9px;top:237.19999999999996px;">Use video and speakers</div>
<svg style="position:absolute;left:372.5px;top:236.49999999999997px" width="7.6" height="7.6" viewBox="0 0 15.2 15.2"><circle cx="7.6" cy="7.6" r="7" fill="#E8700C"/><circle cx="6.6" cy="6" r="4.5" fill="#F8A050" opacity="0.6"/><path d="M6 4.2 L10.5 7.6 L6 11z" fill="#fff"/></svg>
<div class="t sr" style="left:381.3px;top:237.19999999999996px;">Normal</div>
<svg style="position:absolute;left:413.5px;top:236.29999999999998px" width="7" height="8.2" viewBox="0 0 14 16.4"><path d="M1 0.8 h8 l4 4 v11.4 h-12z" fill="#E6EEFA" stroke="#8CA0C8" stroke-width="1.1"/><path d="M9 0.8 v4 h4" fill="#C8D8F0" stroke="#8CA0C8" stroke-width="0.9"/></svg>
<div class="t sr" style="left:421.9px;top:237.19999999999996px;">Created</div>
<div style="position:absolute;left:107px;top:245px;width:1px;height:12px;background:#DAD7CF"></div>
<div style="position:absolute;left:114px;top:256px;width:353px;height:1px;background:#DAD7CF"></div>
<div style="position:absolute;left:114px;top:245px;width:1px;height:12px;background:#DAD7CF"></div>
<div style="position:absolute;left:142px;top:245px;width:1px;height:12px;background:#DAD7CF"></div>
<div style="position:absolute;left:176px;top:245px;width:1px;height:12px;background:#DAD7CF"></div>
<div style="position:absolute;left:205px;top:245px;width:1px;height:12px;background:#DAD7CF"></div>
<div style="position:absolute;left:371px;top:245px;width:1px;height:12px;background:#DAD7CF"></div>
<div style="position:absolute;left:412px;top:245px;width:1px;height:12px;background:#DAD7CF"></div>
<div style="position:absolute;left:454px;top:245px;width:1px;height:12px;background:#DAD7CF"></div>
<div style="position:absolute;left:467px;top:245px;width:1px;height:12px;background:#DAD7CF"></div>
<div style="position:absolute;left:125.9px;top:248.225px;width:6.2px;height:6.2px;border:1px solid #6E6E6E;background:#fff"></div>
<div class="t pc" style="left:176.6px;top:248.35px;">0 %</div>
<div class="t sr" style="left:206.9px;top:248.14999999999998px;">Test all parts of the presentation</div>
<svg style="position:absolute;left:372.5px;top:247.45px" width="7.6" height="7.6" viewBox="0 0 15.2 15.2"><circle cx="7.6" cy="7.6" r="7" fill="#E8700C"/><circle cx="6.6" cy="6" r="4.5" fill="#F8A050" opacity="0.6"/><path d="M6 4.2 L10.5 7.6 L6 11z" fill="#fff"/></svg>
<div class="t sr" style="left:381.3px;top:248.14999999999998px;">Normal</div>
<svg style="position:absolute;left:413.5px;top:247.25px" width="7" height="8.2" viewBox="0 0 14 16.4"><path d="M1 0.8 h8 l4 4 v11.4 h-12z" fill="#E6EEFA" stroke="#8CA0C8" stroke-width="1.1"/><path d="M9 0.8 v4 h4" fill="#C8D8F0" stroke="#8CA0C8" stroke-width="0.9"/></svg>
<div class="t sr" style="left:421.9px;top:248.14999999999998px;">Created</div>
<div style="position:absolute;left:107px;top:50px;width:1px;height:232px;background:repeating-linear-gradient(#484848 0 1px,#B8B8B8 1px 1.6px,transparent 1.6px 3px)"></div>
<div style="position:absolute;left:466.5px;top:50px;width:1px;height:232px;background:repeating-linear-gradient(#484848 0 1px,#B8B8B8 1px 1.6px,transparent 1.6px 3px)"></div>
<div style="position:absolute;left:83px;top:258px;width:408px;height:1px;background:repeating-linear-gradient(90deg,#484848 0 1px,#B8B8B8 1px 1.6px,transparent 1.6px 3px)"></div>
<div style="position:absolute;left:83px;top:270.3px;width:408px;height:1px;background:repeating-linear-gradient(90deg,#484848 0 1px,#B8B8B8 1px 1.6px,transparent 1.6px 3px)"></div>
<div style="position:absolute;left:82px;top:288.5px;width:411px;height:230px;background:#fff;border-left:1px solid #666;border-top:1px solid #8E8C84;border-right:2px solid #111"></div>
<div style="position:absolute;left:107px;top:313px;width:361px;height:1px;background:#DAD7CF"></div>
<div style="position:absolute;left:107px;top:323px;width:361px;height:1px;background:#DAD7CF"></div>
<div style="position:absolute;left:107px;top:313px;width:1px;height:175px;background:#DAD7CF"></div>
<div style="position:absolute;left:142px;top:313px;width:1px;height:11px;background:#DAD7CF"></div>
<div style="position:absolute;left:176px;top:313px;width:1px;height:11px;background:#DAD7CF"></div>
<div style="position:absolute;left:205px;top:313px;width:1px;height:11px;background:#DAD7CF"></div>
<div style="position:absolute;left:371px;top:313px;width:1px;height:11px;background:#DAD7CF"></div>
<div style="position:absolute;left:412px;top:313px;width:1px;height:11px;background:#DAD7CF"></div>
<div style="position:absolute;left:454px;top:313px;width:1px;height:11px;background:#DAD7CF"></div>
<div style="position:absolute;left:467px;top:313px;width:1px;height:11px;background:#DAD7CF"></div>
<div class="t " style="left:118px;top:316.2px;font-family:Liberation Serif;font-size:6px;font-weight:bold;color:#111">Done</div>
<svg style="position:absolute;left:144.5px;top:315.2px" width="5.8" height="6" viewBox="0 0 11.6 12"><path d="M5.8 0.5 L11 6 L5.8 11.5 L0.6 6z" fill="#2A5CD0"/><path d="M5.8 2.5 L8.5 6 L5.8 8 L3.2 6z" fill="#A8C8FF"/></svg>
<div class="t " style="left:157.8px;top:316.2px;font-family:Liberation Serif;font-size:6px;font-weight:bold;color:#111">Info</div>
<div class="t " style="left:178px;top:316.2px;font-family:Liberation Serif;font-size:6px;font-weight:bold;color:#111">Complete</div>
<div style="position:absolute;left:114px;top:334px;width:353px;height:1px;background:#DAD7CF"></div>
<div style="position:absolute;left:114px;top:323px;width:1px;height:12px;background:#DAD7CF"></div>
<div style="position:absolute;left:142px;top:323px;width:1px;height:12px;background:#DAD7CF"></div>
<div style="position:absolute;left:176px;top:323px;width:1px;height:12px;background:#DAD7CF"></div>
<div style="position:absolute;left:205px;top:323px;width:1px;height:12px;background:#DAD7CF"></div>
<div style="position:absolute;left:371px;top:323px;width:1px;height:12px;background:#DAD7CF"></div>
<div style="position:absolute;left:412px;top:323px;width:1px;height:12px;background:#DAD7CF"></div>
<div style="position:absolute;left:454px;top:323px;width:1px;height:12px;background:#DAD7CF"></div>
<div style="position:absolute;left:467px;top:323px;width:1px;height:12px;background:#DAD7CF"></div>
<div style="position:absolute;left:125.9px;top:326.2px;width:6.2px;height:6.2px;border:1px solid #6E6E6E;background:#fff"></div>
<div class="t pc" style="left:176.6px;top:326.29999999999995px;">0 %</div>
<div class="t sr" style="left:206.9px;top:326.09999999999997px;">Arrive at the meeting place early</div>
<svg style="position:absolute;left:372.5px;top:325.4px" width="7.6" height="7.6" viewBox="0 0 15.2 15.2"><circle cx="7.6" cy="7.6" r="7" fill="#E8700C"/><circle cx="6.6" cy="6" r="4.5" fill="#F8A050" opacity="0.6"/><path d="M6 4.2 L10.5 7.6 L6 11z" fill="#fff"/></svg>
<div class="t sr" style="left:381.3px;top:326.09999999999997px;">Normal</div>
<svg style="position:absolute;left:413.5px;top:325.2px" width="7" height="8.2" viewBox="0 0 14 16.4"><path d="M1 0.8 h8 l4 4 v11.4 h-12z" fill="#E6EEFA" stroke="#8CA0C8" stroke-width="1.1"/><path d="M9 0.8 v4 h4" fill="#C8D8F0" stroke="#8CA0C8" stroke-width="0.9"/></svg>
<div class="t sr" style="left:421.9px;top:326.09999999999997px;">Created</div>
<div style="position:absolute;left:107px;top:334px;width:361px;height:1px;background:#DAD7CF"></div>
<div style="position:absolute;left:114px;top:344px;width:353px;height:1px;background:#DAD7CF"></div>
<div style="position:absolute;left:107px;top:334px;width:1px;height:11px;background:#DAD7CF"></div>
<div style="position:absolute;left:467px;top:334px;width:1px;height:11px;background:#DAD7CF"></div>
<div style="position:absolute;left:109px;top:337.4px;width:5px;height:5px;border:1px solid #8A8878;background:#F0EEE6"></div>
<div style="position:absolute;left:110.4px;top:339.29999999999995px;width:2.4px;height:0.9px;background:#333"></div>
<div class="t sr" style="left:115.6px;top:337.2px;">Category : Support</div>
<div style="position:absolute;left:114px;top:355px;width:353px;height:1px;background:#DAD7CF"></div>
<div style="position:absolute;left:114px;top:344px;width:1px;height:12px;background:#DAD7CF"></div>
<div style="position:absolute;left:142px;top:344px;width:1px;height:12px;background:#DAD7CF"></div>
<div style="position:absolute;left:176px;top:344px;width:1px;height:12px;background:#DAD7CF"></div>
<div style="position:absolute;left:205px;top:344px;width:1px;height:12px;background:#DAD7CF"></div>
<div style="position:absolute;left:371px;top:344px;width:1px;height:12px;background:#DAD7CF"></div>
<div style="position:absolute;left:412px;top:344px;width:1px;height:12px;background:#DAD7CF"></div>
<div style="position:absolute;left:454px;top:344px;width:1px;height:12px;background:#DAD7CF"></div>
<div style="position:absolute;left:467px;top:344px;width:1px;height:12px;background:#DAD7CF"></div>
<div style="position:absolute;left:125.9px;top:347.19px;width:6.2px;height:6.2px;border:1px solid #6E6E6E;background:#fff"></div>
<div class="t pc" style="left:176.6px;top:347.05999999999995px;">0 %</div>
<div class="t sr" style="left:206.9px;top:345.9px;">Again check how you will end the presentation</div>
<svg style="position:absolute;left:372.5px;top:345.79999999999995px" width="7.6" height="7.6" viewBox="0 0 15.2 15.2"><circle cx="7.6" cy="7.6" r="7" fill="#E8700C"/><circle cx="6.6" cy="6" r="4.5" fill="#F8A050" opacity="0.6"/><path d="M6 4.2 L10.5 7.6 L6 11z" fill="#fff"/></svg>
<div class="t sr" style="left:381.3px;top:346.49999999999994px;">Normal</div>
<svg style="position:absolute;left:413.5px;top:345.59999999999997px" width="7" height="8.2" viewBox="0 0 14 16.4"><path d="M1 0.8 h8 l4 4 v11.4 h-12z" fill="#E6EEFA" stroke="#8CA0C8" stroke-width="1.1"/><path d="M9 0.8 v4 h4" fill="#C8D8F0" stroke="#8CA0C8" stroke-width="0.9"/></svg>
<div class="t sr" style="left:421.9px;top:346.49999999999994px;">Created</div>
<svg style="position:absolute;left:159.5px;top:345.9px" width="7.5" height="8" viewBox="0 0 15.0 16"><path d="M7.5 2 C5 2 4.5 5 4 9 L2.5 13 h10 L11 9 C10.5 5 10 2 7.5 2z" fill="#E8B818" stroke="#B88010" stroke-width="0.8"/><circle cx="7.5" cy="14" r="1.5" fill="#C89010"/><path d="M2 4 L3 6 M13 4 L12 6" stroke="#E0A0A0" stroke-width="1"/></svg>
<div style="position:absolute;left:114px;top:366px;width:353px;height:1px;background:#DAD7CF"></div>
<div style="position:absolute;left:114px;top:355px;width:1px;height:12px;background:#DAD7CF"></div>
<div style="position:absolute;left:142px;top:355px;width:1px;height:12px;background:#DAD7CF"></div>
<div style="position:absolute;left:176px;top:355px;width:1px;height:12px;background:#DAD7CF"></div>
<div style="position:absolute;left:205px;top:355px;width:1px;height:12px;background:#DAD7CF"></div>
<div style="position:absolute;left:371px;top:355px;width:1px;height:12px;background:#DAD7CF"></div>
<div style="position:absolute;left:412px;top:355px;width:1px;height:12px;background:#DAD7CF"></div>
<div style="position:absolute;left:454px;top:355px;width:1px;height:12px;background:#DAD7CF"></div>
<div style="position:absolute;left:467px;top:355px;width:1px;height:12px;background:#DAD7CF"></div>
<div style="position:absolute;left:125.9px;top:358.17px;width:6.2px;height:6.2px;border:1px solid #6E6E6E;background:#fff"></div>
<div class="t pc" style="left:176.6px;top:358.03999999999996px;">0 %</div>
<div class="t sr" style="left:206.9px;top:356.88px;">Add to your outline the examples you will use to illustrate, substantiate</div>
<svg style="position:absolute;left:372.8px;top:356.78px" width="7.2" height="7.2" viewBox="0 0 14.4 14.4"><rect x="0.5" y="0.5" width="13.4" height="13.4" rx="2" fill="#D8281C"/><path d="M3.5 9 L7.2 5 L10.9 9" fill="none" stroke="#fff" stroke-width="2"/></svg>
<div class="t sr" style="left:381.3px;top:357.47999999999996px;">High</div>
<svg style="position:absolute;left:413.5px;top:356.58px" width="7" height="8.2" viewBox="0 0 14 16.4"><path d="M1 0.8 h8 l4 4 v11.4 h-12z" fill="#E6EEFA" stroke="#8CA0C8" stroke-width="1.1"/><path d="M9 0.8 v4 h4" fill="#C8D8F0" stroke="#8CA0C8" stroke-width="0.9"/></svg>
<div class="t sr" style="left:421.9px;top:357.47999999999996px;">Created</div>
<div style="position:absolute;left:114px;top:377px;width:353px;height:1px;background:#DAD7CF"></div>
<div style="position:absolute;left:114px;top:366px;width:1px;height:12px;background:#DAD7CF"></div>
<div style="position:absolute;left:142px;top:366px;width:1px;height:12px;background:#DAD7CF"></div>
<div style="position:absolute;left:176px;top:366px;width:1px;height:12px;background:#DAD7CF"></div>
<div style="position:absolute;left:205px;top:366px;width:1px;height:12px;background:#DAD7CF"></div>
<div style="position:absolute;left:371px;top:366px;width:1px;height:12px;background:#DAD7CF"></div>
<div style="position:absolute;left:412px;top:366px;width:1px;height:12px;background:#DAD7CF"></div>
<div style="position:absolute;left:454px;top:366px;width:1px;height:12px;background:#DAD7CF"></div>
<div style="position:absolute;left:467px;top:366px;width:1px;height:12px;background:#DAD7CF"></div>
<div style="position:absolute;left:125.9px;top:369.15px;width:6.2px;height:6.2px;border:1px solid #6E6E6E;background:#fff"></div>
<div class="t pc" style="left:176.6px;top:369.0199999999999px;">90 %</div>
<div class="t sr" style="left:206.9px;top:367.85999999999996px;">Develop details of examples, stories, statistical support, etc.</div>
<svg style="position:absolute;left:372.5px;top:367.75999999999993px" width="7.6" height="7.6" viewBox="0 0 15.2 15.2"><circle cx="7.6" cy="7.6" r="7" fill="#E8700C"/><circle cx="6.6" cy="6" r="4.5" fill="#F8A050" opacity="0.6"/><path d="M6 4.2 L10.5 7.6 L6 11z" fill="#fff"/></svg>
<div class="t sr" style="left:381.3px;top:368.4599999999999px;">Normal</div>
<svg style="position:absolute;left:413px;top:367.55999999999995px" width="8" height="8" viewBox="0 0 16 16"><circle cx="8" cy="8" r="7.4" fill="#E8700C"/><circle cx="7" cy="6.5" r="4.5" fill="#F8A050" opacity="0.6"/><path d="M6.2 4.4 L11 8 L6.2 11.6z" fill="#fff"/></svg>
<div class="t sr" style="left:421.9px;top:368.4599999999999px;">Open</div>
<div style="position:absolute;left:114px;top:388px;width:353px;height:1px;background:#DAD7CF"></div>
<div style="position:absolute;left:114px;top:377px;width:1px;height:12px;background:#DAD7CF"></div>
<div style="position:absolute;left:142px;top:377px;width:1px;height:12px;background:#DAD7CF"></div>
<div style="position:absolute;left:176px;top:377px;width:1px;height:12px;background:#DAD7CF"></div>
<div style="position:absolute;left:205px;top:377px;width:1px;height:12px;background:#DAD7CF"></div>
<div style="position:absolute;left:371px;top:377px;width:1px;height:12px;background:#DAD7CF"></div>
<div style="position:absolute;left:412px;top:377px;width:1px;height:12px;background:#DAD7CF"></div>
<div style="position:absolute;left:454px;top:377px;width:1px;height:12px;background:#DAD7CF"></div>
<div style="position:absolute;left:467px;top:377px;width:1px;height:12px;background:#DAD7CF"></div>
<div style="position:absolute;left:125.9px;top:380.13px;width:6.2px;height:6.2px;border:1px solid #6E6E6E;background:#fff"></div>
<div class="t pc" style="left:176.6px;top:379.99999999999994px;">0 %</div>
<div class="t sr" style="left:206.9px;top:378.84px;">Consider what other forms of support can add value</div>
<svg style="position:absolute;left:372.8px;top:378.73999999999995px" width="7.2" height="7.2" viewBox="0 0 14.4 14.4"><rect x="0.5" y="0.5" width="13.4" height="13.4" rx="2" fill="#28B020"/><path d="M3.5 6.5 L6.5 9.5 L11 4.5" fill="none" stroke="#fff" stroke-width="2"/></svg>
<div class="t sr" style="left:381.3px;top:379.43999999999994px;">Low</div>
<svg style="position:absolute;left:413.5px;top:378.53999999999996px" width="7" height="8.2" viewBox="0 0 14 16.4"><path d="M1 0.8 h8 l4 4 v11.4 h-12z" fill="#E6EEFA" stroke="#8CA0C8" stroke-width="1.1"/><path d="M9 0.8 v4 h4" fill="#C8D8F0" stroke="#8CA0C8" stroke-width="0.9"/></svg>
<div class="t sr" style="left:421.9px;top:379.43999999999994px;">Created</div>
<div style="position:absolute;left:114px;top:399px;width:353px;height:1px;background:#DAD7CF"></div>
<div style="position:absolute;left:114px;top:388px;width:1px;height:12px;background:#DAD7CF"></div>
<div style="position:absolute;left:142px;top:388px;width:1px;height:12px;background:#DAD7CF"></div>
<div style="position:absolute;left:176px;top:388px;width:1px;height:12px;background:#DAD7CF"></div>
<div style="position:absolute;left:205px;top:388px;width:1px;height:12px;background:#DAD7CF"></div>
<div style="position:absolute;left:371px;top:388px;width:1px;height:12px;background:#DAD7CF"></div>
<div style="position:absolute;left:412px;top:388px;width:1px;height:12px;background:#DAD7CF"></div>
<div style="position:absolute;left:454px;top:388px;width:1px;height:12px;background:#DAD7CF"></div>
<div style="position:absolute;left:467px;top:388px;width:1px;height:12px;background:#DAD7CF"></div>
<div style="position:absolute;left:125.9px;top:391.11px;width:6.2px;height:6.2px;border:1px solid #6E6E6E;background:#fff"></div>
<div class="t pc" style="left:176.6px;top:390.97999999999996px;">0 %</div>
<div class="t sr" style="left:206.9px;top:389.82px;">Make sure you know what your graphics production capability is</div>
<svg style="position:absolute;left:372.5px;top:389.71999999999997px" width="7.6" height="7.6" viewBox="0 0 15.2 15.2"><circle cx="7.6" cy="7.6" r="7" fill="#E8700C"/><circle cx="6.6" cy="6" r="4.5" fill="#F8A050" opacity="0.6"/><path d="M6 4.2 L10.5 7.6 L6 11z" fill="#fff"/></svg>
<div class="t sr" style="left:381.3px;top:390.41999999999996px;">Normal</div>
<svg style="position:absolute;left:413px;top:389.52px" width="8" height="8" viewBox="0 0 16 16"><circle cx="8" cy="8" r="7.4" fill="#E8700C"/><circle cx="7" cy="6.5" r="4.5" fill="#F8A050" opacity="0.6"/><path d="M6.2 4.4 L11 8 L6.2 11.6z" fill="#fff"/></svg>
<div class="t sr" style="left:421.9px;top:390.41999999999996px;">Open</div>
<div style="position:absolute;left:114px;top:410px;width:353px;height:1px;background:#DAD7CF"></div>
<div style="position:absolute;left:114px;top:399px;width:1px;height:12px;background:#DAD7CF"></div>
<div style="position:absolute;left:142px;top:399px;width:1px;height:12px;background:#DAD7CF"></div>
<div style="position:absolute;left:176px;top:399px;width:1px;height:12px;background:#DAD7CF"></div>
<div style="position:absolute;left:205px;top:399px;width:1px;height:12px;background:#DAD7CF"></div>
<div style="position:absolute;left:371px;top:399px;width:1px;height:12px;background:#DAD7CF"></div>
<div style="position:absolute;left:412px;top:399px;width:1px;height:12px;background:#DAD7CF"></div>
<div style="position:absolute;left:454px;top:399px;width:1px;height:12px;background:#DAD7CF"></div>
<div style="position:absolute;left:467px;top:399px;width:1px;height:12px;background:#DAD7CF"></div>
<div style="position:absolute;left:125.9px;top:402.09px;width:6.2px;height:6.2px;border:1px solid #6E6E6E;background:#fff"></div>
<div class="t pc" style="left:176.6px;top:401.9599999999999px;">60 %</div>
<div class="t sr" style="left:206.9px;top:400.79999999999995px;">Make a test run to ensure graphics quality and capability</div>
<svg style="position:absolute;left:372.8px;top:400.69999999999993px" width="7.2" height="7.2" viewBox="0 0 14.4 14.4"><rect x="0.5" y="0.5" width="13.4" height="13.4" rx="2" fill="#D8281C"/><path d="M3.5 7 L7.2 3.5 L10.9 7 M3.5 11 L7.2 7.5 L10.9 11" fill="none" stroke="#fff" stroke-width="1.6"/></svg>
<div class="t sr" style="left:381.3px;top:401.3999999999999px;">Highest</div>
<svg style="position:absolute;left:413px;top:400.49999999999994px" width="8" height="8" viewBox="0 0 16 16"><circle cx="8" cy="8" r="7.4" fill="#E8700C"/><circle cx="7" cy="6.5" r="4.5" fill="#F8A050" opacity="0.6"/><path d="M6.2 4.4 L11 8 L6.2 11.6z" fill="#fff"/></svg>
<div class="t sr" style="left:421.9px;top:401.3999999999999px;">Open</div>
<div style="position:absolute;left:114px;top:421px;width:353px;height:1px;background:#DAD7CF"></div>
<div style="position:absolute;left:114px;top:410px;width:1px;height:12px;background:#DAD7CF"></div>
<div style="position:absolute;left:142px;top:410px;width:1px;height:12px;background:#DAD7CF"></div>
<div style="position:absolute;left:176px;top:410px;width:1px;height:12px;background:#DAD7CF"></div>
<div style="position:absolute;left:205px;top:410px;width:1px;height:12px;background:#DAD7CF"></div>
<div style="position:absolute;left:371px;top:410px;width:1px;height:12px;background:#DAD7CF"></div>
<div style="position:absolute;left:412px;top:410px;width:1px;height:12px;background:#DAD7CF"></div>
<div style="position:absolute;left:454px;top:410px;width:1px;height:12px;background:#DAD7CF"></div>
<div style="position:absolute;left:467px;top:410px;width:1px;height:12px;background:#DAD7CF"></div>
<div style="position:absolute;left:125.9px;top:413.07px;width:6.2px;height:6.2px;border:1px solid #6E6E6E;background:#fff"></div>
<div class="t pc" style="left:176.6px;top:412.93999999999994px;">50 %</div>
<div class="t sr" style="left:206.9px;top:411.78px;">Transform the concepts from your story board to complete graphics</div>
<svg style="position:absolute;left:372.8px;top:411.67999999999995px" width="7.2" height="7.2" viewBox="0 0 14.4 14.4"><rect x="0.5" y="0.5" width="13.4" height="13.4" rx="2" fill="#D8281C"/><path d="M3.5 9 L7.2 5 L10.9 9" fill="none" stroke="#fff" stroke-width="2"/></svg>
<div class="t sr" style="left:381.3px;top:412.37999999999994px;">High</div>
<svg style="position:absolute;left:413px;top:411.47999999999996px" width="8" height="8" viewBox="0 0 16 16"><circle cx="8" cy="8" r="7.4" fill="#E8700C"/><circle cx="7" cy="6.5" r="4.5" fill="#F8A050" opacity="0.6"/><path d="M6.2 4.4 L11 8 L6.2 11.6z" fill="#fff"/></svg>
<div class="t sr" style="left:421.9px;top:412.37999999999994px;">Open</div>
<svg style="position:absolute;left:167px;top:411.47999999999996px" width="8.2" height="7.5" viewBox="0 0 16.4 15.0"><path d="M2 14 V4" stroke="#507050" stroke-width="1.2"/><path d="M2 3 C6 1 10 3 15.5 9 C11 10 6 8 2 9z" fill="#1E9A1E"/><path d="M4 4 C7 3 9 5 11 7" stroke="#60D060" stroke-width="1" fill="none"/></svg>
<div style="position:absolute;left:114px;top:432px;width:353px;height:1px;background:#DAD7CF"></div>
<div style="position:absolute;left:114px;top:421px;width:1px;height:12px;background:#DAD7CF"></div>
<div style="position:absolute;left:142px;top:421px;width:1px;height:12px;background:#DAD7CF"></div>
<div style="position:absolute;left:176px;top:421px;width:1px;height:12px;background:#DAD7CF"></div>
<div style="position:absolute;left:205px;top:421px;width:1px;height:12px;background:#DAD7CF"></div>
<div style="position:absolute;left:371px;top:421px;width:1px;height:12px;background:#DAD7CF"></div>
<div style="position:absolute;left:412px;top:421px;width:1px;height:12px;background:#DAD7CF"></div>
<div style="position:absolute;left:454px;top:421px;width:1px;height:12px;background:#DAD7CF"></div>
<div style="position:absolute;left:467px;top:421px;width:1px;height:12px;background:#DAD7CF"></div>
<div style="position:absolute;left:125.9px;top:424.05px;width:6.2px;height:6.2px;border:1px solid #6E6E6E;background:#fff"></div>
<div class="t pc" style="left:176.6px;top:423.91999999999996px;">30 %</div>
<div class="t sr" style="left:206.9px;top:422.76px;">Review/test visual aids</div>
<svg style="position:absolute;left:372.8px;top:422.65999999999997px" width="7.2" height="7.2" viewBox="0 0 14.4 14.4"><rect x="0.5" y="0.5" width="13.4" height="13.4" rx="2" fill="#28B020"/><path d="M3.5 6.5 L6.5 9.5 L11 4.5" fill="none" stroke="#fff" stroke-width="2"/></svg>
<div class="t sr" style="left:381.3px;top:423.35999999999996px;">Low</div>
<svg style="position:absolute;left:413px;top:422.46px" width="8" height="8" viewBox="0 0 16 16"><circle cx="8" cy="8" r="7.4" fill="#E8700C"/><circle cx="7" cy="6.5" r="4.5" fill="#F8A050" opacity="0.6"/><path d="M6.2 4.4 L11 8 L6.2 11.6z" fill="#fff"/></svg>
<div class="t sr" style="left:421.9px;top:423.35999999999996px;">Open</div>
<div style="position:absolute;left:114px;top:443px;width:353px;height:1px;background:#DAD7CF"></div>
<div style="position:absolute;left:114px;top:432px;width:1px;height:12px;background:#DAD7CF"></div>
<div style="position:absolute;left:142px;top:432px;width:1px;height:12px;background:#DAD7CF"></div>
<div style="position:absolute;left:176px;top:432px;width:1px;height:12px;background:#DAD7CF"></div>
<div style="position:absolute;left:205px;top:432px;width:1px;height:12px;background:#DAD7CF"></div>
<div style="position:absolute;left:371px;top:432px;width:1px;height:12px;background:#DAD7CF"></div>
<div style="position:absolute;left:412px;top:432px;width:1px;height:12px;background:#DAD7CF"></div>
<div style="position:absolute;left:454px;top:432px;width:1px;height:12px;background:#DAD7CF"></div>
<div style="position:absolute;left:467px;top:432px;width:1px;height:12px;background:#DAD7CF"></div>
<div style="position:absolute;left:125.9px;top:435.03000000000003px;width:6.2px;height:6.2px;border:1px solid #6E6E6E;background:#fff"></div>
<div class="t pc" style="left:176.6px;top:434.9px;">0 %</div>
<div class="t sr" style="left:206.9px;top:433.74px;">Refine graphics to get best effectiveness</div>
<svg style="position:absolute;left:372.8px;top:433.64px" width="7.2" height="7.2" viewBox="0 0 14.4 14.4"><rect x="0.5" y="0.5" width="13.4" height="13.4" rx="2" fill="#28B020"/><path d="M3.5 6.5 L6.5 9.5 L11 4.5" fill="none" stroke="#fff" stroke-width="2"/></svg>
<div class="t sr" style="left:381.3px;top:434.34px;">Low</div>
<svg style="position:absolute;left:413.5px;top:433.44px" width="7" height="8.2" viewBox="0 0 14 16.4"><path d="M1 0.8 h8 l4 4 v11.4 h-12z" fill="#E6EEFA" stroke="#8CA0C8" stroke-width="1.1"/><path d="M9 0.8 v4 h4" fill="#C8D8F0" stroke="#8CA0C8" stroke-width="0.9"/></svg>
<div class="t sr" style="left:421.9px;top:434.34px;">Created</div>
<div style="position:absolute;left:114px;top:454px;width:353px;height:1px;background:#DAD7CF"></div>
<div style="position:absolute;left:114px;top:443px;width:1px;height:12px;background:#DAD7CF"></div>
<div style="position:absolute;left:142px;top:443px;width:1px;height:12px;background:#DAD7CF"></div>
<div style="position:absolute;left:176px;top:443px;width:1px;height:12px;background:#DAD7CF"></div>
<div style="position:absolute;left:205px;top:443px;width:1px;height:12px;background:#DAD7CF"></div>
<div style="position:absolute;left:371px;top:443px;width:1px;height:12px;background:#DAD7CF"></div>
<div style="position:absolute;left:412px;top:443px;width:1px;height:12px;background:#DAD7CF"></div>
<div style="position:absolute;left:454px;top:443px;width:1px;height:12px;background:#DAD7CF"></div>
<div style="position:absolute;left:467px;top:443px;width:1px;height:12px;background:#DAD7CF"></div>
<div style="position:absolute;left:125.9px;top:446.01px;width:6.2px;height:6.2px;border:1px solid #6E6E6E;background:#fff"></div>
<svg class="ck" style="left:125.9px;top:446.01px" width="6.2" height="6.2" viewBox="0 0 6 6"><path d="M1.8 3.0 L2.8 4.1 L4.6 2.0" fill="none" stroke="#000" stroke-width="1.3"/></svg>
<div class="t pc" style="left:176.6px;top:445.87999999999994px;">100 %</div>
<div class="t sr" style="left:206.9px;top:444.71999999999997px;">Now complete your delivery script</div>
<svg style="position:absolute;left:372.5px;top:444.61999999999995px" width="7.6" height="7.6" viewBox="0 0 15.2 15.2"><circle cx="7.6" cy="7.6" r="7" fill="#E8700C"/><circle cx="6.6" cy="6" r="4.5" fill="#F8A050" opacity="0.6"/><path d="M6 4.2 L10.5 7.6 L6 11z" fill="#fff"/></svg>
<div class="t sr" style="left:381.3px;top:445.31999999999994px;">Normal</div>
<svg style="position:absolute;left:413px;top:444.41999999999996px" width="8" height="8" viewBox="0 0 16 16"><circle cx="8" cy="8" r="6.2" fill="none" stroke="#E8780C" stroke-width="2.2"/><circle cx="8" cy="8" r="2.6" fill="none" stroke="#F0A050" stroke-width="1.4"/></svg>
<div class="t sr" style="left:421.9px;top:445.31999999999994px;">Ok</div>
<div style="position:absolute;left:114px;top:465px;width:353px;height:1px;background:#DAD7CF"></div>
<div style="position:absolute;left:114px;top:454px;width:1px;height:12px;background:#DAD7CF"></div>
<div style="position:absolute;left:142px;top:454px;width:1px;height:12px;background:#DAD7CF"></div>
<div style="position:absolute;left:176px;top:454px;width:1px;height:12px;background:#DAD7CF"></div>
<div style="position:absolute;left:205px;top:454px;width:1px;height:12px;background:#DAD7CF"></div>
<div style="position:absolute;left:371px;top:454px;width:1px;height:12px;background:#DAD7CF"></div>
<div style="position:absolute;left:412px;top:454px;width:1px;height:12px;background:#DAD7CF"></div>
<div style="position:absolute;left:454px;top:454px;width:1px;height:12px;background:#DAD7CF"></div>
<div style="position:absolute;left:467px;top:454px;width:1px;height:12px;background:#DAD7CF"></div>
<div style="position:absolute;left:125.9px;top:456.99px;width:6.2px;height:6.2px;border:1px solid #6E6E6E;background:#fff"></div>
<div class="t pc" style="left:176.6px;top:456.85999999999996px;">0 %</div>
<div class="t sr" style="left:206.9px;top:455.7px;">moves one o</div>
<svg style="position:absolute;left:372.5px;top:455.59999999999997px" width="7.6" height="7.6" viewBox="0 0 15.2 15.2"><circle cx="7.6" cy="7.6" r="7" fill="#E8700C"/><circle cx="6.6" cy="6" r="4.5" fill="#F8A050" opacity="0.6"/><path d="M6 4.2 L10.5 7.6 L6 11z" fill="#fff"/></svg>
<div class="t sr" style="left:381.3px;top:456.29999999999995px;">Normal</div>
<svg style="position:absolute;left:413.5px;top:455.4px" width="7" height="8.2" viewBox="0 0 14 16.4"><path d="M1 0.8 h8 l4 4 v11.4 h-12z" fill="#E6EEFA" stroke="#8CA0C8" stroke-width="1.1"/><path d="M9 0.8 v4 h4" fill="#C8D8F0" stroke="#8CA0C8" stroke-width="0.9"/></svg>
<div class="t sr" style="left:421.9px;top:456.29999999999995px;">Created</div>
<div style="position:absolute;left:114px;top:476px;width:353px;height:1px;background:#DAD7CF"></div>
<div style="position:absolute;left:114px;top:465px;width:1px;height:12px;background:#DAD7CF"></div>
<div style="position:absolute;left:142px;top:465px;width:1px;height:12px;background:#DAD7CF"></div>
<div style="position:absolute;left:176px;top:465px;width:1px;height:12px;background:#DAD7CF"></div>
<div style="position:absolute;left:205px;top:465px;width:1px;height:12px;background:#DAD7CF"></div>
<div style="position:absolute;left:371px;top:465px;width:1px;height:12px;background:#DAD7CF"></div>
<div style="position:absolute;left:412px;top:465px;width:1px;height:12px;background:#DAD7CF"></div>
<div style="position:absolute;left:454px;top:465px;width:1px;height:12px;background:#DAD7CF"></div>
<div style="position:absolute;left:467px;top:465px;width:1px;height:12px;background:#DAD7CF"></div>
<div style="position:absolute;left:125.9px;top:467.96999999999997px;width:6.2px;height:6.2px;border:1px solid #6E6E6E;background:#fff"></div>
<div class="t pc" style="left:176.6px;top:467.8399999999999px;">0 %</div>
<div class="t sr" style="left:206.9px;top:466.67999999999995px;">Develop backup charts and plan</div>
<svg style="position:absolute;left:372.8px;top:466.5799999999999px" width="7.2" height="7.2" viewBox="0 0 14.4 14.4"><rect x="0.5" y="0.5" width="13.4" height="13.4" rx="2" fill="#D8281C"/><path d="M3.5 9 L7.2 5 L10.9 9" fill="none" stroke="#fff" stroke-width="2"/></svg>
<div class="t sr" style="left:381.3px;top:467.2799999999999px;">High</div>
<svg style="position:absolute;left:413.5px;top:466.37999999999994px" width="7" height="8.2" viewBox="0 0 14 16.4"><path d="M1 0.8 h8 l4 4 v11.4 h-12z" fill="#E6EEFA" stroke="#8CA0C8" stroke-width="1.1"/><path d="M9 0.8 v4 h4" fill="#C8D8F0" stroke="#8CA0C8" stroke-width="0.9"/></svg>
<div class="t sr" style="left:421.9px;top:467.2799999999999px;">Created</div>
<div style="position:absolute;left:114px;top:487px;width:353px;height:1px;background:#DAD7CF"></div>
<div style="position:absolute;left:114px;top:476px;width:1px;height:12px;background:#DAD7CF"></div>
<div style="position:absolute;left:142px;top:476px;width:1px;height:12px;background:#DAD7CF"></div>
<div style="position:absolute;left:176px;top:476px;width:1px;height:12px;background:#DAD7CF"></div>
<div style="position:absolute;left:205px;top:476px;width:1px;height:12px;background:#DAD7CF"></div>
<div style="position:absolute;left:371px;top:476px;width:1px;height:12px;background:#DAD7CF"></div>
<div style="position:absolute;left:412px;top:476px;width:1px;height:12px;background:#DAD7CF"></div>
<div style="position:absolute;left:454px;top:476px;width:1px;height:12px;background:#DAD7CF"></div>
<div style="position:absolute;left:467px;top:476px;width:1px;height:12px;background:#DAD7CF"></div>
<div style="position:absolute;left:125.9px;top:478.95px;width:6.2px;height:6.2px;border:1px solid #6E6E6E;background:#fff"></div>
<div class="t pc" style="left:176.6px;top:478.81999999999994px;">0 %</div>
<div class="t sr" style="left:206.9px;top:477.65999999999997px;">Meet printing deadlines</div>
<svg style="position:absolute;left:372.5px;top:477.55999999999995px" width="7.6" height="7.6" viewBox="0 0 15.2 15.2"><circle cx="7.6" cy="7.6" r="7" fill="#E8700C"/><circle cx="6.6" cy="6" r="4.5" fill="#F8A050" opacity="0.6"/><path d="M6 4.2 L10.5 7.6 L6 11z" fill="#fff"/></svg>
<div class="t sr" style="left:381.3px;top:478.25999999999993px;">Normal</div>
<svg style="position:absolute;left:413.5px;top:477.35999999999996px" width="7" height="8.2" viewBox="0 0 14 16.4"><path d="M1 0.8 h8 l4 4 v11.4 h-12z" fill="#E6EEFA" stroke="#8CA0C8" stroke-width="1.1"/><path d="M9 0.8 v4 h4" fill="#C8D8F0" stroke="#8CA0C8" stroke-width="0.9"/></svg>
<div class="t sr" style="left:421.9px;top:478.25999999999993px;">Created</div>
<div style="position:absolute;left:107px;top:487px;width:361px;height:1px;background:#DAD7CF"></div>
</div>
<div style="position:absolute;left:244.3px;top:118.1px;width:318.3px;height:234.6px;background:#0A4FE0;border-radius:5px 5px 0 0"></div>
<div style="position:absolute;left:244.3px;top:118.1px;width:318.3px;height:14.6px;background:linear-gradient(#3A8CF8 0,#1664F0 12%,#0458E8 40%,#0050E0 85%,#0A4AC8 100%);border-radius:5px 5px 0 0"></div>
<div style="position:absolute;left:246.1px;top:132.7px;width:314.5px;height:218.5px;background:#ECE9D8"></div>
<div style="position:absolute;left:247.7px;top:122.8px;width:6.8px;height:6.6px;background:radial-gradient(circle,#D8C8A0 0 20%,#4A4A40 25% 60%,#8A8060 65%);border-radius:50%"></div>
<div class="t " style="left:256.6px;top:123.9px;font-size:6.5px;font-weight:bold;color:#fff">Format Report</div>
<div style="position:absolute;left:549.3px;top:121.4px;width:10.7px;height:10px;background:linear-gradient(135deg,#F09070,#E05028 50%,#C83A18);border:0.7px solid #fff;border-radius:1.5px"></div>
<div class="t " style="left:551.9px;top:121.9px;font-size:7.8px;color:#fff;font-weight:bold">&#x2715;</div>
<div style="position:absolute;left:248px;top:145.4px;width:311px;height:188.6px;border:1px solid;border-color:#FFFFFF #8C8A80 #8C8A80 #FFFFFF;border-bottom-width:1.6px"></div>
<div style="position:absolute;left:249.5px;top:136px;width:19.5px;height:9.4px;background:#F0EEE4"></div>
<div class="t ui" style="left:251.7px;top:138.8px;">View</div>
<div style="position:absolute;left:270px;top:134.2px;width:29.5px;height:12px;background:#ECE9D8;border:1px solid;border-color:#FFFFFF #8C8A80 transparent #FFFFFF;border-bottom:none"></div>
<div class="t ui" style="left:272.6px;top:138.0px;">Behaviors</div>
<div style="position:absolute;left:330px;top:137px;width:1px;height:8px;background:#8C8A80"></div>
<div class="t ui" style="left:302.2px;top:138.8px;">Formatting</div>
<div style="position:absolute;left:350.8px;top:137px;width:1px;height:8px;background:#8C8A80"></div>
<div class="t ui" style="left:333.7px;top:138.8px;">Styles</div>
<div style="position:absolute;left:375px;top:137px;width:1px;height:8px;background:#8C8A80"></div>
<div class="t ui" style="left:354.4px;top:138.8px;">Preview</div>
<div style="position:absolute;left:397px;top:137px;width:1px;height:8px;background:#8C8A80"></div>
<div class="t ui" style="left:378.7px;top:138.8px;">Cards</div>
<div class="t ui" style="left:252.2px;top:151.8px;">Selection</div>
<div style="position:absolute;left:278.8px;top:153.4px;width:119.19999999999999px;height:1px;background:#C9C5B3"></div>
<div style="position:absolute;left:278.8px;top:154.4px;width:119.19999999999999px;height:0.6px;background:#FFFFFF"></div>
<div class="t ui" style="left:252.2px;top:185.6px;">Expanding</div>
<div style="position:absolute;left:282.7px;top:187.2px;width:115.30000000000001px;height:1px;background:#C9C5B3"></div>
<div style="position:absolute;left:282.7px;top:188.2px;width:115.30000000000001px;height:0.6px;background:#FFFFFF"></div>
<div class="t ui" style="left:252.2px;top:218.8px;">Size</div>
<div style="position:absolute;left:266.3px;top:220.4px;width:131.7px;height:1px;background:#C9C5B3"></div>
<div style="position:absolute;left:266.3px;top:221.4px;width:131.7px;height:0.6px;background:#FFFFFF"></div>
<div class="t ui" style="left:252.2px;top:252.4px;">Details</div>
<div style="position:absolute;left:273.3px;top:254.0px;width:124.69999999999999px;height:1px;background:#C9C5B3"></div>
<div style="position:absolute;left:273.3px;top:255.0px;width:124.69999999999999px;height:0.6px;background:#FFFFFF"></div>
<div class="t ui" style="left:252.2px;top:286.2px;">Levels</div>
<div style="position:absolute;left:272px;top:287.8px;width:126px;height:1px;background:#C9C5B3"></div>
<div style="position:absolute;left:272px;top:288.8px;width:126px;height:0.6px;background:#FFFFFF"></div>
<div style="position:absolute;left:255px;top:161px;width:12.5px;height:15.6px;background:#5C5C5A;border-radius:1.2px"></div>
<div style="position:absolute;left:256.3px;top:162.3px;width:9.9px;height:13.0px;background:linear-gradient(90deg,transparent 0 44%,#8A8A86 44% 52%,transparent 52%),repeating-linear-gradient(#F0F0EA 0 1.7px,#9A9A96 1.7px 2.6px)"></div>
<div style="position:absolute;left:273.3px;top:161px;width:12.7px;height:15.6px;background:#5C5C5A;border-radius:1.2px"></div>
<div style="position:absolute;left:274.6px;top:162.3px;width:10.1px;height:13.0px;background:linear-gradient(90deg,transparent 0 18%,#ECECEA 18% 24%,transparent 24% 76%,#ECECEA 76% 82%,transparent 82%),repeating-linear-gradient(#C6C6C4 0 2.2px,#E6E6E4 2.2px 3.1px)"></div>
<div style="position:absolute;left:268.2px;top:162.2px;width:1.8px;height:1.8px;background:#1434F8;border-radius:50%"></div>
<div style="position:absolute;left:270.2px;top:162.2px;width:1.8px;height:1.8px;background:#1434F8;border-radius:50%"></div>
<div style="position:absolute;left:268.2px;top:168.8px;width:1.8px;height:1.8px;background:#1434F8;border-radius:50%"></div>
<div style="position:absolute;left:270.2px;top:168.8px;width:1.8px;height:1.8px;background:#1434F8;border-radius:50%"></div>
<div style="position:absolute;left:268.2px;top:174.2px;width:1.8px;height:1.8px;background:#1434F8;border-radius:50%"></div>
<div style="position:absolute;left:270.2px;top:174.2px;width:1.8px;height:1.8px;background:#1434F8;border-radius:50%"></div>
<div style="position:absolute;left:255px;top:195px;width:12.5px;height:15.6px;background:#5C5C5A;border-radius:1.2px"></div>
<div style="position:absolute;left:256.3px;top:196.3px;width:9.9px;height:13.0px;background:linear-gradient(90deg,transparent 0 44%,#8A8A86 44% 52%,transparent 52%),repeating-linear-gradient(#F0F0EA 0 1.7px,#9A9A96 1.7px 2.6px)"></div>
<div style="position:absolute;left:273.3px;top:195px;width:12.7px;height:15.6px;background:#5C5C5A;border-radius:1.2px"></div>
<div style="position:absolute;left:274.6px;top:196.3px;width:10.1px;height:13.0px;background:linear-gradient(90deg,transparent 0 18%,#ECECEA 18% 24%,transparent 24% 76%,#ECECEA 76% 82%,transparent 82%),repeating-linear-gradient(#C6C6C4 0 2.2px,#E6E6E4 2.2px 3.1px)"></div>
<div style="position:absolute;left:268.2px;top:198.0px;width:1.8px;height:1.8px;background:#1434F8;border-radius:50%"></div>
<div style="position:absolute;left:270.2px;top:198.0px;width:1.8px;height:1.8px;background:#1434F8;border-radius:50%"></div>
<div style="position:absolute;left:268.2px;top:203.5px;width:1.8px;height:1.8px;background:#1434F8;border-radius:50%"></div>
<div style="position:absolute;left:270.2px;top:203.5px;width:1.8px;height:1.8px;background:#1434F8;border-radius:50%"></div>
<div style="position:absolute;left:255px;top:228.3px;width:12.6px;height:15.6px;background:#5C5C5A;border-radius:1.2px"></div>
<div style="position:absolute;left:256.3px;top:229.60000000000002px;width:10px;height:13px;background:repeating-linear-gradient(90deg,#F4F4F0 0 2px,#A8A8A4 2px 2.6px,#E8E8E4 2.6px 5px),#EEE"></div>
<div style="position:absolute;left:256.3px;top:229.60000000000002px;width:10px;height:13px;background:repeating-linear-gradient(transparent 0 2.4px,rgba(120,120,116,0.55) 2.4px 3.2px)"></div>
<div style="position:absolute;left:273.3px;top:228.3px;width:12.6px;height:15.6px;background:#5C5C5A;border-radius:1.2px"></div>
<div style="position:absolute;left:274.6px;top:229.60000000000002px;width:10px;height:13px;background:repeating-linear-gradient(90deg,#F4F4F0 0 2px,#A8A8A4 2px 2.6px,#E8E8E4 2.6px 5px),#EEE"></div>
<div style="position:absolute;left:274.6px;top:229.60000000000002px;width:10px;height:13px;background:repeating-linear-gradient(transparent 0 2.4px,rgba(120,120,116,0.55) 2.4px 3.2px)"></div>
<div style="position:absolute;left:268.2px;top:233.8px;width:1.8px;height:1.8px;background:#1434F8;border-radius:50%"></div>
<div style="position:absolute;left:270.2px;top:233.8px;width:1.8px;height:1.8px;background:#1434F8;border-radius:50%"></div>
<div style="position:absolute;left:268.2px;top:237.8px;width:1.8px;height:1.8px;background:#1434F8;border-radius:50%"></div>
<div style="position:absolute;left:270.2px;top:237.8px;width:1.8px;height:1.8px;background:#1434F8;border-radius:50%"></div>
<div style="position:absolute;left:255px;top:261.9px;width:12.5px;height:15.6px;background:#5C5C5A;border-radius:1.2px"></div>
<div style="position:absolute;left:256.3px;top:263.2px;width:9.9px;height:13.0px;background:linear-gradient(90deg,transparent 0 44%,#8A8A86 44% 52%,transparent 52%),repeating-linear-gradient(#F0F0EA 0 1.7px,#9A9A96 1.7px 2.6px)"></div>
<div style="position:absolute;left:255.6px;top:266.4px;width:11.3px;height:10.5px;border:1.3px solid #C82020"></div>
<div style="position:absolute;left:273.3px;top:261.9px;width:12.7px;height:15.6px;background:#5C5C5A;border-radius:1.2px"></div>
<div style="position:absolute;left:274.6px;top:263.2px;width:10.1px;height:13.0px;background:linear-gradient(90deg,transparent 0 18%,#ECECEA 18% 24%,transparent 24% 76%,#ECECEA 76% 82%,transparent 82%),repeating-linear-gradient(#C6C6C4 0 2.2px,#E6E6E4 2.2px 3.1px)"></div>
<div style="position:absolute;left:268.2px;top:267.9px;width:1.8px;height:1.8px;background:#1434F8;border-radius:50%"></div>
<div style="position:absolute;left:270.2px;top:267.9px;width:1.8px;height:1.8px;background:#1434F8;border-radius:50%"></div>
<div style="position:absolute;left:268.2px;top:272.4px;width:1.8px;height:1.8px;background:#1434F8;border-radius:50%"></div>
<div style="position:absolute;left:270.2px;top:272.4px;width:1.8px;height:1.8px;background:#1434F8;border-radius:50%"></div>
<div style="position:absolute;left:255px;top:295px;width:12.5px;height:15.6px;background:#5C5C5A;border-radius:1.2px"></div>
<div style="position:absolute;left:256.3px;top:296.3px;width:9.9px;height:13.0px;background:linear-gradient(90deg,transparent 0 44%,#8A8A86 44% 52%,transparent 52%),repeating-linear-gradient(#F0F0EA 0 1.7px,#9A9A96 1.7px 2.6px)"></div>
<div style="position:absolute;left:273.3px;top:295px;width:12.7px;height:15.6px;background:#5C5C5A;border-radius:1.2px"></div>
<div style="position:absolute;left:274.6px;top:296.3px;width:10.1px;height:13.0px;background:linear-gradient(90deg,transparent 0 18%,#ECECEA 18% 24%,transparent 24% 76%,#ECECEA 76% 82%,transparent 82%),repeating-linear-gradient(#C6C6C4 0 2.2px,#E6E6E4 2.2px 3.1px)"></div>
<div style="position:absolute;left:257.5px;top:300px;width:2px;height:1.6px;background:#D03030"></div>
<div style="position:absolute;left:262.5px;top:303.5px;width:2.5px;height:1.6px;background:#3050D0"></div>
<div style="position:absolute;left:263.5px;top:306.5px;width:2.5px;height:1.6px;background:#D03030"></div>
<div style="position:absolute;left:281px;top:304px;width:1.6px;height:4.5px;background:#C04848"></div>
<div style="position:absolute;left:268.2px;top:296.8px;width:1.8px;height:1.8px;background:#1434F8;border-radius:50%"></div>
<div style="position:absolute;left:270.2px;top:296.8px;width:1.8px;height:1.8px;background:#1434F8;border-radius:50%"></div>
<div style="position:absolute;left:268.2px;top:303.8px;width:1.8px;height:1.8px;background:#1434F8;border-radius:50%"></div>
<div style="position:absolute;left:270.2px;top:303.8px;width:1.8px;height:1.8px;background:#1434F8;border-radius:50%"></div>
<div style="position:absolute;left:295.3px;top:162.2px;width:6.2px;height:6.2px;border:1px solid;border-color:#6A675C #E8E6DC #E8E6DC #6A675C;background:linear-gradient(135deg,#E4E2DA,#FFFFFF 60%)"></div>
<div class="t ui" style="left:303.8px;top:162.7px;color:#111">Process Selection</div>
<div style="position:absolute;left:295.3px;top:172.7px;width:6.2px;height:6.2px;border:1px solid;border-color:#C4C1B4 #F4F2EA #F4F2EA #C4C1B4;background:#ECE9D8"></div>
<div class="t ui" style="left:303.8px;top:173.2px;color:#ACA899">Process Exact Selection</div>
<div style="position:absolute;left:295.3px;top:196px;width:6.2px;height:6.2px;border:1px solid;border-color:#6A675C #E8E6DC #E8E6DC #6A675C;background:linear-gradient(135deg,#E4E2DA,#FFFFFF 60%)"></div>
<div class="t ui" style="left:303.8px;top:196.5px;color:#111">Groups</div>
<div style="position:absolute;left:295.3px;top:206.6px;width:6.2px;height:6.2px;border:1px solid;border-color:#6A675C #E8E6DC #E8E6DC #6A675C;background:linear-gradient(135deg,#E4E2DA,#FFFFFF 60%)"></div>
<div class="t ui" style="left:303.8px;top:207.1px;color:#111">Details</div>
<div style="position:absolute;left:295.3px;top:229.8px;width:6.2px;height:6.2px;border:1px solid;border-color:#6A675C #E8E6DC #E8E6DC #6A675C;background:linear-gradient(135deg,#E4E2DA,#FFFFFF 60%)"></div>
<svg class="ck" style="left:295.3px;top:229.8px" width="6.2" height="6.2" viewBox="0 0 6 6"><path d="M1.4 2.8 L2.6 4.2 L4.9 1.6" fill="none" stroke="#111" stroke-width="1.5"/></svg>
<div class="t ui" style="left:303.8px;top:230.3px;color:#111">Auto Width</div>
<div style="position:absolute;left:295.3px;top:262.7px;width:6.2px;height:6.2px;border:1px solid;border-color:#6A675C #E8E6DC #E8E6DC #6A675C;background:linear-gradient(135deg,#E4E2DA,#FFFFFF 60%)"></div>
<div class="t ui" style="left:303.8px;top:263.2px;color:#111">Start from Active Details</div>
<div style="position:absolute;left:295.3px;top:273.6px;width:6.2px;height:6.2px;border:1px solid;border-color:#C4C1B4 #F4F2EA #F4F2EA #C4C1B4;background:#ECE9D8"></div>
<div class="t ui" style="left:303.8px;top:274.1px;color:#ACA899">Only Active Details</div>
<div style="position:absolute;left:295.3px;top:296.2px;width:6.2px;height:6.2px;border:1px solid;border-color:#6A675C #E8E6DC #E8E6DC #6A675C;background:linear-gradient(135deg,#E4E2DA,#FFFFFF 60%)"></div>
<div class="t ui" style="left:303.8px;top:296.7px;color:#111">Unwrap</div>
<div style="position:absolute;left:295.3px;top:308px;width:6.2px;height:6.2px;border:1px solid;border-color:#C4C1B4 #F4F2EA #F4F2EA #C4C1B4;background:#ECE9D8"></div>
<svg class="ck" style="left:295.3px;top:308px" width="6.2" height="6.2" viewBox="0 0 6 6"><path d="M1.4 2.8 L2.6 4.2 L4.9 1.6" fill="none" stroke="#B8B5A8" stroke-width="1.5"/></svg>
<div class="t ui" style="left:303.8px;top:308.5px;color:#ACA899">Unwrap Top Level</div>
<div style="position:absolute;left:295.3px;top:319.4px;width:6.2px;height:6.2px;border:1px solid;border-color:#C4C1B4 #F4F2EA #F4F2EA #C4C1B4;background:#ECE9D8"></div>
<svg class="ck" style="left:295.3px;top:319.4px" width="6.2" height="6.2" viewBox="0 0 6 6"><path d="M1.4 2.8 L2.6 4.2 L4.9 1.6" fill="none" stroke="#B8B5A8" stroke-width="1.5"/></svg>
<div class="t ui" style="left:303.8px;top:319.9px;color:#ACA899">Rise Active Level onto Top</div>
<div class="t ui" style="left:401.9px;top:149.3px;">Preview</div>
<div style="position:absolute;left:402.4px;top:155px;width:150.60000000000002px;height:172px;background:#fff;border:1px solid;border-color:#ACA899 #FFFFFF #FFFFFF #ACA899"></div>
<div style="position:absolute;left:404px;top:159px;width:149px;height:1px;background:#444"></div>
<div style="position:absolute;left:404px;top:168px;width:149px;height:1px;background:#444"></div>
<div style="position:absolute;left:404px;top:177px;width:149px;height:1px;background:#555"></div>
<div style="position:absolute;left:404px;top:159px;width:1px;height:19px;background:#444"></div>
<div style="position:absolute;left:552px;top:159px;width:1px;height:19px;background:#444"></div>
<div style="position:absolute;left:496px;top:159px;width:1px;height:19px;background:#444"></div>
<div style="position:absolute;left:450px;top:168px;width:1px;height:10px;background:#444"></div>
<div style="position:absolute;left:533px;top:168px;width:1px;height:10px;background:#444"></div>
<div class="t sr" style="left:404.4px;top:160.9px;width:91px;text-align:center">Manufacture Data</div>
<div class="t sr" style="left:495.6px;top:160.9px;width:56px;text-align:center">Car Data</div>
<div class="t " style="left:406px;top:170.3px;font-size:5.8px;font-weight:bold;color:#000">Name</div>
<div class="t " style="left:452px;top:170.3px;font-size:5.8px;font-weight:bold;color:#000">Logo</div>
<div class="t " style="left:497px;top:170.3px;font-size:5.8px;font-weight:bold;color:#000">Model</div>
<div class="t " style="left:535.5px;top:170.3px;font-size:5.8px;font-weight:bold;color:#000">SUV</div>
<div style="position:absolute;left:404px;top:177px;width:1px;height:27px;background:#CDC9C0"></div>
<div style="position:absolute;left:552px;top:177px;width:1px;height:27px;background:#CDC9C0"></div>
<div style="position:absolute;left:450px;top:177px;width:1px;height:19px;background:#CDC9C0"></div>
<div style="position:absolute;left:496px;top:177px;width:1px;height:19px;background:#CDC9C0"></div>
<div style="position:absolute;left:533px;top:177px;width:1px;height:19px;background:#CDC9C0"></div>
<div style="position:absolute;left:404px;top:196px;width:149px;height:1px;background:#CDC9C0"></div>
<div style="position:absolute;left:404px;top:204px;width:149px;height:1px;background:#CDC9C0"></div>
<div class="t sr" style="left:406px;top:180.0px;">BMW</div>
<div class="t sr" style="left:496.7px;top:179.8px;">X5 4.6is</div>
<div style="position:absolute;left:539.2px;top:183.4px;width:6.6px;height:6.6px;border:1px solid #555;background:#fff"></div>
<svg class="ck" style="left:539.2px;top:183.4px" width="6.6" height="6.6" viewBox="0 0 6 6"><path d="M1.8 3.0 L2.8 4.1 L4.6 2.0" fill="none" stroke="#111" stroke-width="1.6"/></svg>
<div class="t " style="left:415.6px;top:198.29999999999998px;font-size:5.8px;color:#2424F0">Germany</div>
<div style="position:absolute;left:463.3px;top:178.9px;width:15.6px;height:15.4px;background:radial-gradient(circle at 45% 35%,#777 0,#111 60%);border-radius:50%"></div>
<div style="position:absolute;left:466.3px;top:181.9px;width:9.6px;height:9.4px;background:conic-gradient(#fff 0 25%,#3A8AD8 25% 50%,#fff 50% 75%,#3A8AD8 75%);border-radius:50%"></div>
<div style="position:absolute;left:404px;top:204px;width:1px;height:26px;background:#CDC9C0"></div>
<div style="position:absolute;left:552px;top:204px;width:1px;height:26px;background:#CDC9C0"></div>
<div style="position:absolute;left:450px;top:204px;width:1px;height:17px;background:#CDC9C0"></div>
<div style="position:absolute;left:496px;top:204px;width:1px;height:17px;background:#CDC9C0"></div>
<div style="position:absolute;left:533px;top:204px;width:1px;height:17px;background:#CDC9C0"></div>
<div style="position:absolute;left:404px;top:221px;width:149px;height:1px;background:#CDC9C0"></div>
<div style="position:absolute;left:404px;top:230px;width:149px;height:1px;background:#CDC9C0"></div>
<div class="t sr" style="left:406px;top:206.6px;">Ford</div>
<div class="t sr" style="left:496.7px;top:206.4px;">Excursion</div>
<div style="position:absolute;left:539.2px;top:210.0px;width:6.6px;height:6.6px;border:1px solid #555;background:#fff"></div>
<svg class="ck" style="left:539.2px;top:210.0px" width="6.6" height="6.6" viewBox="0 0 6 6"><path d="M1.8 3.0 L2.8 4.1 L4.6 2.0" fill="none" stroke="#111" stroke-width="1.6"/></svg>
<div class="t " style="left:415.6px;top:223.9px;font-size:5.8px;color:#2424F0">United States</div>
<div style="position:absolute;left:458.2px;top:207.7px;width:28.3px;height:10.3px;background:radial-gradient(ellipse,#3060B0,#1A3A80 70%);border-radius:50%;border:0.6px solid #8090C0"></div>
<div class="t " style="left:465px;top:209.5px;font-family:Liberation Serif;font-style:italic;font-size:6px;color:#fff">Ford</div>
<div style="position:absolute;left:404px;top:230px;width:1px;height:27px;background:#CDC9C0"></div>
<div style="position:absolute;left:552px;top:230px;width:1px;height:27px;background:#CDC9C0"></div>
<div style="position:absolute;left:450px;top:230px;width:1px;height:18px;background:#CDC9C0"></div>
<div style="position:absolute;left:496px;top:230px;width:1px;height:18px;background:#CDC9C0"></div>
<div style="position:absolute;left:533px;top:230px;width:1px;height:18px;background:#CDC9C0"></div>
<div style="position:absolute;left:404px;top:248px;width:149px;height:1px;background:#CDC9C0"></div>
<div style="position:absolute;left:404px;top:257px;width:149px;height:1px;background:#CDC9C0"></div>
<div class="t sr" style="left:406px;top:232.7px;">Audi</div>
<div class="t sr" style="left:496.7px;top:232.5px;">S8 Quattro</div>
<div style="position:absolute;left:539.2px;top:236.1px;width:6.6px;height:6.6px;border:1px solid #555;background:#fff"></div>
<div class="t " style="left:415.6px;top:250.29999999999998px;font-size:5.8px;color:#2424F0">Germany</div>
<div style="position:absolute;left:459.0px;top:232.1px;width:8.3px;height:8.3px;border:0.9px solid #B85060;border-radius:50%"></div>
<div style="position:absolute;left:465.2px;top:232.1px;width:8.3px;height:8.3px;border:0.9px solid #B85060;border-radius:50%"></div>
<div style="position:absolute;left:471.4px;top:232.1px;width:8.3px;height:8.3px;border:0.9px solid #B85060;border-radius:50%"></div>
<div style="position:absolute;left:477.6px;top:232.1px;width:8.3px;height:8.3px;border:0.9px solid #B85060;border-radius:50%"></div>
<div class="t " style="left:462px;top:241.1px;font-size:5.6px;font-weight:bold;color:#D02030;letter-spacing:0.5px">Audi</div>
<div style="position:absolute;left:404px;top:257px;width:1px;height:26px;background:#CDC9C0"></div>
<div style="position:absolute;left:552px;top:257px;width:1px;height:26px;background:#CDC9C0"></div>
<div style="position:absolute;left:450px;top:257px;width:1px;height:17px;background:#CDC9C0"></div>
<div style="position:absolute;left:496px;top:257px;width:1px;height:17px;background:#CDC9C0"></div>
<div style="position:absolute;left:533px;top:257px;width:1px;height:17px;background:#CDC9C0"></div>
<div style="position:absolute;left:404px;top:274px;width:149px;height:1px;background:#CDC9C0"></div>
<div style="position:absolute;left:404px;top:283px;width:149px;height:1px;background:#CDC9C0"></div>
<div class="t sr" style="left:406px;top:259.6px;">Land Rover</div>
<div class="t sr" style="left:496.7px;top:259.4px;">G4 Challenge</div>
<div style="position:absolute;left:539.2px;top:263.0px;width:6.6px;height:6.6px;border:1px solid #555;background:#fff"></div>
<svg class="ck" style="left:539.2px;top:263.0px" width="6.6" height="6.6" viewBox="0 0 6 6"><path d="M1.8 3.0 L2.8 4.1 L4.6 2.0" fill="none" stroke="#111" stroke-width="1.6"/></svg>
<div class="t " style="left:415.6px;top:276.6px;font-size:5.8px;color:#2424F0">United Kingdom</div>
<div style="position:absolute;left:459px;top:259.9px;width:27.5px;height:11.8px;background:radial-gradient(ellipse at 50% 40%,#60B070,#1E7A30 70%);border-radius:50%"></div>
<div class="t " style="left:466.2px;top:261.6px;font-size:3.6px;font-weight:bold;color:#E8F4E8;letter-spacing:0.4px">LAND</div>
<div class="t " style="left:464.2px;top:265.4px;font-size:3.6px;font-weight:bold;color:#E8F4E8;letter-spacing:0.2px">-ROVER-</div>
<div style="position:absolute;left:247.9px;top:336.9px;width:57.49999999999997px;height:11.600000000000023px;background:linear-gradient(#F4F3EC,#ECE9D8 60%,#E2DECE);border:1px solid #6A665A;border-radius:0.8px;box-shadow:inset 1px 1px 0 #FFFFFF,inset -1px -1px 0 #B8B4A4"></div>
<div class="t " style="left:247.9px;top:339.9px;font-size:5.6px;color:#111;width:57.49999999999997px;text-align:center">Title Properties...</div>
<div style="position:absolute;left:442.7px;top:337px;width:37.19999999999999px;height:11.399999999999977px;background:linear-gradient(#F4F3EC,#ECE9D8 60%,#E2DECE);border:1px solid #9A968A;border-radius:0.8px;box-shadow:inset 1px 1px 0 #FFFFFF,inset -1px -1px 0 #B8B4A4"></div>
<div class="t " style="left:442.7px;top:340.0px;font-size:5.6px;color:#111;width:37.19999999999999px;text-align:center">OK</div>
<div style="position:absolute;left:482.5px;top:337px;width:37.200000000000045px;height:11.399999999999977px;background:linear-gradient(#F4F3EC,#ECE9D8 60%,#E2DECE);border:1px solid #9A968A;border-radius:0.8px;box-shadow:inset 1px 1px 0 #FFFFFF,inset -1px -1px 0 #B8B4A4"></div>
<div class="t " style="left:482.5px;top:340.0px;font-size:5.6px;color:#111;width:37.200000000000045px;text-align:center">Cancel</div>
<div style="position:absolute;left:521.9px;top:337px;width:36.80000000000007px;height:11.399999999999977px;background:linear-gradient(#F4F3EC,#ECE9D8 60%,#E2DECE);border:1px solid #C4C0B0;border-radius:0.8px;box-shadow:inset 1px 1px 0 #FFFFFF,inset -1px -1px 0 #B8B4A4"></div>
<div class="t " style="left:521.9px;top:340.0px;font-size:5.6px;color:#ACA899;width:36.80000000000007px;text-align:center">Apply</div>
<div style="position:absolute;left:587.5px;top:55.8px;width:40.5px;height:56.3px;background:#fff;border:2px solid #2A62D8"></div>
<div style="position:absolute;left:590.9px;top:58.9px;width:34.4px;height:45.6px;background:repeating-linear-gradient(#D9D7D0 0 3.8px,#E8E7E2 3.8px 4.6px)"></div>
<div style="position:absolute;left:591.9px;top:58.9px;width:1px;height:45.6px;background:repeating-linear-gradient(#444 0 2px,#AAA 2px 3px)"></div>
<div style="position:absolute;left:596.5px;top:58.9px;width:0.8px;height:45.6px;background:#C8C6BE"></div>
<div style="position:absolute;left:600.1999999999999px;top:58.9px;width:0.8px;height:45.6px;background:#CFCDC6"></div>
<div style="position:absolute;left:617.5px;top:58.9px;width:1px;height:45.6px;background:#E0A060"></div>
<div style="position:absolute;left:621.5px;top:58.9px;width:0.8px;height:45.6px;background:#E8C8A8"></div>
<div class="t " style="left:600.6px;top:68.4px;font-family:Liberation Serif;font-size:34px;color:#6262DA;-webkit-text-stroke:1.2px #6262DA">1</div>
<div style="position:absolute;left:587.1px;top:113px;width:41.3px;height:57.5px;background:#fff;border:1px solid;border-color:#9A9890 #111 #111 #333"></div>
<div style="position:absolute;left:590.9px;top:116.1px;width:34.4px;height:16.9px;background:repeating-linear-gradient(#D9D7D0 0 3.8px,#E8E7E2 3.8px 4.6px)"></div>
<div style="position:absolute;left:591.9px;top:116.1px;width:1px;height:16.9px;background:repeating-linear-gradient(#444 0 2px,#AAA 2px 3px)"></div>
<div style="position:absolute;left:596.5px;top:116.1px;width:0.8px;height:16.9px;background:#C8C6BE"></div>
<div style="position:absolute;left:600.1999999999999px;top:116.1px;width:0.8px;height:16.9px;background:#CFCDC6"></div>
<div style="position:absolute;left:617.5px;top:116.1px;width:1px;height:16.9px;background:#E0A060"></div>
<div style="position:absolute;left:621.5px;top:116.1px;width:0.8px;height:16.9px;background:#E8C8A8"></div>
<div class="t " style="left:598.8px;top:127.2px;font-size:32px;color:#6A6AF0;-webkit-text-stroke:0.6px #6A6AF0">2</div>
<div style="position:absolute;left:0px;top:500.3px;width:640px;height:10.2px;background:#ECE9D8;border-top:1px solid #F8F6EE"></div>
<div class="t ui" style="left:4.7px;top:504px;">Page:</div>
<div style="position:absolute;left:21px;top:502.5px;width:20.4px;height:7.8px;background:#EFEDE3;border:1px solid;border-color:#D6D2C2 #DCD8CA #E6E3D6 #D6D2C2"></div>
<div class="t ui" style="left:22.5px;top:504px;width:17.4px;text-align:right">1</div>
<div class="t ui" style="left:50.8px;top:504px;">of</div>
<div style="position:absolute;left:59.4px;top:502.5px;width:20.3px;height:7.8px;background:#EFEDE3;border:1px solid;border-color:#D6D2C2 #DCD8CA #E6E3D6 #D6D2C2"></div>
<div class="t ui" style="left:60.9px;top:504px;width:17.3px;text-align:right">2</div>
<div class="t ui" style="left:89.4px;top:504px;">Pages</div>
<div class="t ui" style="left:118px;top:504px;">Paper Size:</div>
<div style="position:absolute;left:148px;top:502.5px;width:74px;height:7.8px;background:#EFEDE3;border:1px solid;border-color:#D6D2C2 #DCD8CA #E6E3D6 #D6D2C2"></div>
<div class="t ui" style="left:149.5px;top:504px;width:71px;text-align:right">215,9 mm x 279,4 mm</div>
<div class="t ui" style="left:233px;top:504px;">Status:</div>
<div style="position:absolute;left:252px;top:502.5px;width:386px;height:7.8px;background:#EFEDE3;border:1px solid;border-color:#D6D2C2 #DCD8CA #E6E3D6 #D6D2C2"></div>
<div class="t ui" style="left:253.5px;top:504px;width:383px;text-align:left">Ready</div>
<div style="position:absolute;left:0px;top:510.5px;width:640px;height:1.5px;background:#3A6FD8"></div>
</div>
</body></html>
